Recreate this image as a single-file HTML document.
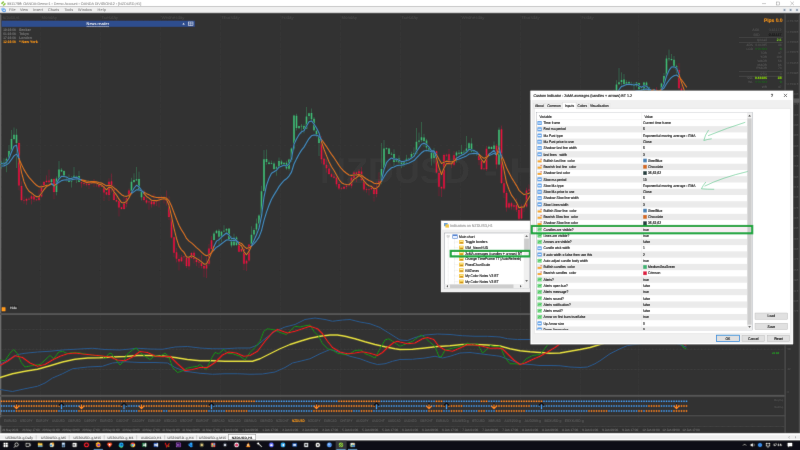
<!DOCTYPE html>
<html><head><meta charset="utf-8"><title>MT4</title>
<style>html,body{margin:0;padding:0;background:#323232;overflow:hidden}svg{display:block;font-family:"Liberation Sans",sans-serif}text{white-space:pre;text-rendering:geometricPrecision}</style>
</head><body>
<svg width="800" height="450" viewBox="0 0 800 450" shape-rendering="auto">
<filter id="bl" x="-10" y="-10" width="820" height="470" filterUnits="userSpaceOnUse"><feConvolveMatrix order="3" kernelMatrix="0.0028 0.0470 0.0028 0.0470 0.8008 0.0470 0.0028 0.0470 0.0028" edgeMode="duplicate" preserveAlpha="true"/></filter>
<g filter="url(#bl)">
<rect x="-10.00" y="-10.00" width="820.00" height="470.00" fill="#323232" />
<rect x="-10.00" y="-10.00" width="820.00" height="16.60" fill="#ffffff" />
<rect x="-10.00" y="6.60" width="820.00" height="5.80" fill="#f0f0f0" />
<rect x="-10.00" y="12.40" width="820.00" height="1.00" fill="#fdfdfd" />
<rect x="-10.00" y="13.40" width="820.00" height="0.90" fill="#262626" />
<path d="M0.9 3.3 L3.2 1.1 L4.3 2.2 L2.0 4.4 Z M2.6 5.0 L4.9 2.8 L6.0 3.9 L3.7 6.1 Z" fill="#8cc63f"/>
<text x="7.20" y="5.20" font-size="3.75" fill="#858585" stroke="#858585" stroke-width="0.05" text-anchor="start" font-weight="normal" textLength="134">5511798: OANDA-Demo-1 - Demo Account - OANDA DIVISION12 - [NZDUSD,H1]</text>
<line x1="762.00" y1="3.60" x2="766.00" y2="3.60" stroke="#777" stroke-width="0.4" />
<rect x="776.6" y="2" width="3" height="3" fill="none" stroke="#777" stroke-width="0.4"/>
<path d="M790.4 1.6 L794 5.2 M794 1.6 L790.4 5.2" stroke="#777" stroke-width="0.4"/>
<circle cx="2.9" cy="9.3" r="1.9" fill="#9cc8f5"/><circle cx="4.1" cy="10.4" r="1.9" fill="#5fa2e8"/><circle cx="4.1" cy="10.4" r="0.8" fill="#e8f2fd"/>
<text x="9.00" y="11.20" font-size="3.75" fill="#777" stroke="#777" stroke-width="0.05" text-anchor="start" font-weight="normal" textLength="6.5">File</text>
<text x="20.00" y="11.20" font-size="3.75" fill="#777" stroke="#777" stroke-width="0.05" text-anchor="start" font-weight="normal" textLength="8">View</text>
<text x="33.00" y="11.20" font-size="3.75" fill="#777" stroke="#777" stroke-width="0.05" text-anchor="start" font-weight="normal" textLength="10">Insert</text>
<text x="48.00" y="11.20" font-size="3.75" fill="#777" stroke="#777" stroke-width="0.05" text-anchor="start" font-weight="normal" textLength="11">Charts</text>
<text x="64.50" y="11.20" font-size="3.75" fill="#777" stroke="#777" stroke-width="0.05" text-anchor="start" font-weight="normal" textLength="8.5">Tools</text>
<text x="78.00" y="11.20" font-size="3.75" fill="#777" stroke="#777" stroke-width="0.05" text-anchor="start" font-weight="normal" textLength="14">Window</text>
<text x="97.50" y="11.20" font-size="3.75" fill="#777" stroke="#777" stroke-width="0.05" text-anchor="start" font-weight="normal" textLength="8.5">Help</text>
<rect x="782.90" y="8.30" width="3.20" height="3.20" fill="#dfe6ee" />
<rect x="783.70" y="9.40" width="1.60" height="1.20" fill="#5a6a80" />
<rect x="789.00" y="8.30" width="3.20" height="3.20" fill="#dfe6ee" />
<rect x="789.80" y="9.40" width="1.60" height="1.20" fill="#5a6a80" />
<rect x="795.40" y="8.30" width="3.20" height="3.20" fill="#dfe6ee" />
<rect x="796.20" y="9.40" width="1.60" height="1.20" fill="#5a6a80" />
<rect x="-10.00" y="14.30" width="11.30" height="419.30" fill="#6a6a6a" />
<line x1="40.40" y1="14.00" x2="40.40" y2="433.00" stroke="#424242" stroke-width="0.5" stroke-dasharray="0.6 0.6"/>
<line x1="100.40" y1="14.00" x2="100.40" y2="433.00" stroke="#424242" stroke-width="0.5" stroke-dasharray="0.6 0.6"/>
<line x1="160.40" y1="14.00" x2="160.40" y2="433.00" stroke="#424242" stroke-width="0.5" stroke-dasharray="0.6 0.6"/>
<line x1="220.40" y1="14.00" x2="220.40" y2="433.00" stroke="#424242" stroke-width="0.5" stroke-dasharray="0.6 0.6"/>
<line x1="280.40" y1="14.00" x2="280.40" y2="433.00" stroke="#424242" stroke-width="0.5" stroke-dasharray="0.6 0.6"/>
<line x1="340.40" y1="14.00" x2="340.40" y2="433.00" stroke="#424242" stroke-width="0.5" stroke-dasharray="0.6 0.6"/>
<line x1="400.40" y1="14.00" x2="400.40" y2="433.00" stroke="#424242" stroke-width="0.5" stroke-dasharray="0.6 0.6"/>
<line x1="460.40" y1="14.00" x2="460.40" y2="433.00" stroke="#424242" stroke-width="0.5" stroke-dasharray="0.6 0.6"/>
<line x1="520.40" y1="14.00" x2="520.40" y2="433.00" stroke="#424242" stroke-width="0.5" stroke-dasharray="0.6 0.6"/>
<line x1="580.40" y1="14.00" x2="580.40" y2="433.00" stroke="#424242" stroke-width="0.5" stroke-dasharray="0.6 0.6"/>
<line x1="638.40" y1="14.00" x2="638.40" y2="433.00" stroke="#424242" stroke-width="0.5" stroke-dasharray="0.6 0.6"/>
<text x="2.80" y="19.00" font-size="3.7" fill="#505050" stroke="#505050" stroke-width="0.05" text-anchor="start" font-weight="normal" textLength="16.8" lengthAdjust="spacingAndGlyphs">NZDUSD,H1</text>
<text x="41.40" y="19.00" font-size="4.4" fill="#4b4b4b" stroke="#4b4b4b" stroke-width="0.05" text-anchor="start" font-weight="normal" >Monday</text>
<text x="101.40" y="19.00" font-size="4.4" fill="#4b4b4b" stroke="#4b4b4b" stroke-width="0.05" text-anchor="start" font-weight="normal" >Tuesday</text>
<text x="161.40" y="19.00" font-size="4.4" fill="#4b4b4b" stroke="#4b4b4b" stroke-width="0.05" text-anchor="start" font-weight="normal" >Wednesday</text>
<text x="221.40" y="19.00" font-size="4.4" fill="#4b4b4b" stroke="#4b4b4b" stroke-width="0.05" text-anchor="start" font-weight="normal" >Thursday</text>
<text x="281.40" y="19.00" font-size="4.4" fill="#4b4b4b" stroke="#4b4b4b" stroke-width="0.05" text-anchor="start" font-weight="normal" >Friday</text>
<text x="341.40" y="19.00" font-size="4.4" fill="#4b4b4b" stroke="#4b4b4b" stroke-width="0.05" text-anchor="start" font-weight="normal" >Monday</text>
<text x="401.40" y="19.00" font-size="4.4" fill="#4b4b4b" stroke="#4b4b4b" stroke-width="0.05" text-anchor="start" font-weight="normal" >Tuesday</text>
<text x="461.40" y="19.00" font-size="4.4" fill="#4b4b4b" stroke="#4b4b4b" stroke-width="0.05" text-anchor="start" font-weight="normal" >Wednesday</text>
<text x="521.40" y="19.00" font-size="4.4" fill="#4b4b4b" stroke="#4b4b4b" stroke-width="0.05" text-anchor="start" font-weight="normal" >Thursday</text>
<text x="581.40" y="19.00" font-size="4.4" fill="#4b4b4b" stroke="#4b4b4b" stroke-width="0.05" text-anchor="start" font-weight="normal" >Friday</text>
<line x1="1.00" y1="21.30" x2="785.00" y2="21.30" stroke="#3a3a3a" stroke-width="0.4" stroke-dasharray="0.6 0.6"/>
<line x1="1.00" y1="31.65" x2="785.00" y2="31.65" stroke="#3a3a3a" stroke-width="0.4" stroke-dasharray="0.6 0.6"/>
<line x1="1.00" y1="42.00" x2="785.00" y2="42.00" stroke="#3a3a3a" stroke-width="0.4" stroke-dasharray="0.6 0.6"/>
<line x1="1.00" y1="52.35" x2="785.00" y2="52.35" stroke="#3a3a3a" stroke-width="0.4" stroke-dasharray="0.6 0.6"/>
<line x1="1.00" y1="62.70" x2="785.00" y2="62.70" stroke="#3a3a3a" stroke-width="0.4" stroke-dasharray="0.6 0.6"/>
<line x1="1.00" y1="73.05" x2="785.00" y2="73.05" stroke="#3a3a3a" stroke-width="0.4" stroke-dasharray="0.6 0.6"/>
<line x1="1.00" y1="83.40" x2="785.00" y2="83.40" stroke="#3a3a3a" stroke-width="0.4" stroke-dasharray="0.6 0.6"/>
<line x1="1.00" y1="93.75" x2="785.00" y2="93.75" stroke="#3a3a3a" stroke-width="0.4" stroke-dasharray="0.6 0.6"/>
<line x1="1.00" y1="104.10" x2="785.00" y2="104.10" stroke="#3a3a3a" stroke-width="0.4" stroke-dasharray="0.6 0.6"/>
<line x1="1.00" y1="114.45" x2="785.00" y2="114.45" stroke="#3a3a3a" stroke-width="0.4" stroke-dasharray="0.6 0.6"/>
<line x1="1.00" y1="124.80" x2="785.00" y2="124.80" stroke="#3a3a3a" stroke-width="0.4" stroke-dasharray="0.6 0.6"/>
<line x1="1.00" y1="135.15" x2="785.00" y2="135.15" stroke="#3a3a3a" stroke-width="0.4" stroke-dasharray="0.6 0.6"/>
<line x1="1.00" y1="145.50" x2="785.00" y2="145.50" stroke="#3a3a3a" stroke-width="0.4" stroke-dasharray="0.6 0.6"/>
<line x1="1.00" y1="155.85" x2="785.00" y2="155.85" stroke="#3a3a3a" stroke-width="0.4" stroke-dasharray="0.6 0.6"/>
<line x1="1.00" y1="166.20" x2="785.00" y2="166.20" stroke="#3a3a3a" stroke-width="0.4" stroke-dasharray="0.6 0.6"/>
<line x1="1.00" y1="176.55" x2="785.00" y2="176.55" stroke="#3a3a3a" stroke-width="0.4" stroke-dasharray="0.6 0.6"/>
<line x1="1.00" y1="186.90" x2="785.00" y2="186.90" stroke="#3a3a3a" stroke-width="0.4" stroke-dasharray="0.6 0.6"/>
<line x1="1.00" y1="197.25" x2="785.00" y2="197.25" stroke="#3a3a3a" stroke-width="0.4" stroke-dasharray="0.6 0.6"/>
<line x1="1.00" y1="207.60" x2="785.00" y2="207.60" stroke="#3a3a3a" stroke-width="0.4" stroke-dasharray="0.6 0.6"/>
<line x1="1.00" y1="217.95" x2="785.00" y2="217.95" stroke="#3a3a3a" stroke-width="0.4" stroke-dasharray="0.6 0.6"/>
<line x1="1.00" y1="228.30" x2="785.00" y2="228.30" stroke="#3a3a3a" stroke-width="0.4" stroke-dasharray="0.6 0.6"/>
<line x1="1.00" y1="238.65" x2="785.00" y2="238.65" stroke="#3a3a3a" stroke-width="0.4" stroke-dasharray="0.6 0.6"/>
<line x1="1.00" y1="249.00" x2="785.00" y2="249.00" stroke="#3a3a3a" stroke-width="0.4" stroke-dasharray="0.6 0.6"/>
<line x1="1.00" y1="259.35" x2="785.00" y2="259.35" stroke="#3a3a3a" stroke-width="0.4" stroke-dasharray="0.6 0.6"/>
<line x1="1.00" y1="269.70" x2="785.00" y2="269.70" stroke="#3a3a3a" stroke-width="0.4" stroke-dasharray="0.6 0.6"/>
<line x1="1.00" y1="280.05" x2="785.00" y2="280.05" stroke="#3a3a3a" stroke-width="0.4" stroke-dasharray="0.6 0.6"/>
<line x1="1.00" y1="290.40" x2="785.00" y2="290.40" stroke="#3a3a3a" stroke-width="0.4" stroke-dasharray="0.6 0.6"/>
<line x1="1.00" y1="300.75" x2="785.00" y2="300.75" stroke="#3a3a3a" stroke-width="0.4" stroke-dasharray="0.6 0.6"/>
<line x1="1.00" y1="311.10" x2="785.00" y2="311.10" stroke="#3a3a3a" stroke-width="0.4" stroke-dasharray="0.6 0.6"/>
<text x="320.00" y="183.00" font-size="36" fill="#383838" stroke="#383838" stroke-width="0" text-anchor="start" font-weight="bold" textLength="150" lengthAdjust="spacingAndGlyphs">NZDUSD</text>
<text x="484.00" y="183.00" font-size="36" fill="#383838" stroke="#383838" stroke-width="0" text-anchor="start" font-weight="bold" textLength="78" lengthAdjust="spacingAndGlyphs">- H1</text>
<rect x="1.60" y="20.70" width="193.20" height="6.10" fill="#2e4d8e" />
<text x="97.80" y="25.10" font-size="3.8" fill="#fff" stroke="#fff" stroke-width="0.05" text-anchor="middle" font-weight="normal" text-decoration="underline" textLength="22.5">News reader</text>
<path d="M182.4 24.6 L183.6 23 L184.8 24.6 Z" fill="#fff"/>
<rect x="188.4" y="22" width="4.6" height="3.6" fill="none" stroke="#fff" stroke-width="0.5"/><path d="M188.4 23.8 H193 M190.7 22 V25.6" stroke="#fff" stroke-width="0.4"/>
<text x="3.20" y="30.90" font-size="3.6" fill="#777" stroke="#777" stroke-width="0.05" text-anchor="start" font-weight="bold" textLength="12.5" lengthAdjust="spacingAndGlyphs">19:16:08</text>
<text x="19.20" y="30.90" font-size="3.6" fill="#777" stroke="#777" stroke-width="0.05" text-anchor="start" font-weight="bold" textLength="11.6" lengthAdjust="spacingAndGlyphs">Broker</text>
<text x="3.20" y="34.90" font-size="3.6" fill="#777" stroke="#777" stroke-width="0.05" text-anchor="start" font-weight="bold" textLength="12.5" lengthAdjust="spacingAndGlyphs">01:16:08</text>
<text x="19.20" y="34.90" font-size="3.6" fill="#777" stroke="#777" stroke-width="0.05" text-anchor="start" font-weight="bold" textLength="9.6" lengthAdjust="spacingAndGlyphs">Tokyo</text>
<text x="3.20" y="38.80" font-size="3.6" fill="#777" stroke="#777" stroke-width="0.05" text-anchor="start" font-weight="bold" textLength="12.5" lengthAdjust="spacingAndGlyphs">17:16:08</text>
<text x="19.20" y="38.80" font-size="3.6" fill="#777" stroke="#777" stroke-width="0.05" text-anchor="start" font-weight="bold" textLength="12.6" lengthAdjust="spacingAndGlyphs">London</text>
<text x="3.20" y="43.00" font-size="3.6" fill="#ff9a1a" stroke="#ff9a1a" stroke-width="0.05" text-anchor="start" font-weight="bold" textLength="12.5" lengthAdjust="spacingAndGlyphs">12:16:08</text>
<text x="19.20" y="43.00" font-size="3.6" fill="#ff9a1a" stroke="#ff9a1a" stroke-width="0.05" text-anchor="start" font-weight="bold" textLength="18.6" lengthAdjust="spacingAndGlyphs">* New York</text>
<path d="M1.5 160.9V168.7M4.0 158.4V166.5M6.5 157.4V172.2M9.0 145.1V160.4M11.5 130.0V152.4M14.0 127.5V140.4M16.5 128.8V168.0M51.5 178.9V184.0M56.5 176.6V195.4M59.0 161.0V181.6M61.5 168.1V172.0M64.0 170.3V177.9M66.5 176.5V181.6M69.0 174.4V182.2M71.5 176.2V187.6M74.0 167.0V178.9M76.5 175.6V183.1M79.0 170.8V181.9M131.5 177.7V193.0M134.0 173.3V182.9M136.5 167.0V180.5M139.0 171.7V191.6M141.5 189.6V200.5M214.0 231.6V240.2M216.5 229.8V233.3M219.0 228.9V245.1M221.5 231.0V241.9M224.0 225.1V231.6M226.5 228.0V234.7M229.0 228.6V239.4M231.5 236.1V247.5M234.0 233.7V246.0M236.5 236.2V245.9M251.5 226.3V246.4M254.0 228.2V237.7M256.5 218.5V234.8M259.0 214.2V227.0M261.5 185.8V219.1M264.0 150.0V191.3M266.5 149.6V164.8M269.0 160.4V164.6M271.5 160.6V164.3M274.0 161.5V169.9M276.5 165.8V175.7M279.0 157.6V167.8M281.5 159.8V165.1M284.0 162.5V166.7M286.5 160.7V169.8M289.0 158.6V170.5M291.5 147.5V162.0M294.0 114.8V150.2M296.5 113.7V130.5M299.0 126.0V128.5M301.5 124.0V133.7M304.0 124.3V133.4M306.5 107.0V129.0M309.0 112.9V119.5M311.5 108.5V121.0M314.0 117.0V131.5M316.5 128.8V137.2M319.0 135.3V156.0M381.5 143.0V184.2M384.0 140.0V169.8M386.5 147.4V149.8M389.0 148.0V153.9M391.5 152.2V155.2M394.0 149.3V167.7M396.5 158.7V161.7M399.0 155.5V163.9M401.5 161.6V168.1M404.0 159.7V166.8M406.5 154.8V164.9M409.0 157.6V161.4M411.5 151.7V159.5M414.0 147.4V156.1M416.5 128.0V154.4M419.0 132.6V144.5M421.5 122.0V142.2M424.0 133.8V146.8M426.5 138.8V150.9M429.0 147.3V152.0M431.5 152.0V165.6M434.0 147.9V163.5M456.5 151.2V162.6M459.0 150.0V155.5M461.5 144.8V154.3M464.0 149.8V155.5M466.5 136.0V152.5M469.0 142.4V152.1M471.5 138.2V152.5M474.0 149.6V155.4M476.5 151.0V155.6M489.0 146.2V148.8M491.5 146.1V148.9M494.0 141.5V149.5M499.0 127.5V164.8M536.5 182.4V197.4M539.0 183.2V188.8M541.5 178.4V193.3M544.0 170.4V184.7M546.5 176.4V184.7M549.0 168.9V181.0M551.5 166.2V170.8M554.0 167.1V170.4M556.5 163.9V168.3M559.0 160.5V166.2M561.5 155.6V163.4M564.0 153.8V165.7M566.5 160.1V171.1M569.0 162.0V167.0M571.5 160.1V165.3M574.0 149.5V163.6M576.5 143.9V160.7M579.0 132.7V148.5M581.5 134.9V142.6M584.0 133.2V138.4M586.5 126.7V137.0M589.0 124.8V131.7M591.5 119.8V126.2M594.0 119.4V124.2M596.5 111.0V121.5M599.0 111.4V116.6M601.5 107.0V114.9M604.0 105.3V110.6M606.5 100.7V107.4M609.0 97.7V106.3M611.5 91.4V100.3M614.0 89.7V95.4M616.5 80.2V92.2M619.0 68.0V84.8M621.5 72.4V87.2M624.0 74.0V84.8M626.5 80.1V85.3M629.0 80.6V84.0M631.5 81.7V86.0M634.0 82.4V90.1M636.5 82.0V87.2M639.0 82.8V94.0M641.5 88.5V91.8M644.0 81.9V91.9M646.5 81.5V89.4M649.0 86.6V94.6M654.0 88.8V98.0M661.5 82.6V96.4M664.0 73.0V85.4M666.5 55.4V78.3M669.0 49.6V61.4M671.5 54.0V60.9M674.0 56.0V68.7M676.5 64.7V73.5" stroke="#3cb371" stroke-width="0.45" opacity="0.75" fill="none"/>
<path d="M1.5 162.4V164.4M4.0 162.5V164.8M6.5 158.7V164.8M9.0 151.0V158.7M11.5 139.1V151.2M14.0 134.7V139.1M16.5 134.7V143.0M51.5 179.3V182.0M56.5 178.6V192.1M59.0 169.4V178.9M61.5 169.8V171.5M64.0 171.1V176.6M66.5 176.8V178.0M69.0 178.2V181.9M71.5 178.2V181.6M74.0 175.8V178.6M76.5 176.0V176.7M79.0 176.1V181.9M131.5 181.8V191.1M134.0 179.9V182.1M136.5 179.3V180.4M139.0 178.9V189.9M141.5 189.7V197.2M214.0 233.6V240.0M216.5 230.8V233.3M219.0 230.8V236.8M221.5 231.7V236.6M224.0 230.8V231.5M226.5 229.1V230.6M229.0 228.6V239.1M231.5 238.8V245.5M234.0 237.6V245.3M236.5 237.4V244.9M251.5 234.8V244.1M254.0 229.9V234.6M256.5 223.4V229.5M259.0 215.4V223.6M261.5 191.3V215.5M264.0 159.2V191.0M266.5 159.1V162.1M269.0 162.5V164.1M271.5 163.0V163.7M274.0 163.4V168.9M276.5 167.2V168.8M279.0 161.1V167.2M281.5 161.4V164.2M284.0 162.7V164.1M286.5 162.7V168.5M289.0 159.4V168.7M291.5 148.6V159.9M294.0 115.5V148.5M296.5 115.8V128.1M299.0 126.1V128.3M301.5 125.8V126.5M304.0 125.9V128.9M306.5 116.4V128.8M309.0 113.3V115.9M311.5 112.9V119.2M314.0 118.8V130.2M316.5 130.5V136.1M319.0 135.8V142.9M381.5 169.0V181.2M384.0 148.5V168.5M386.5 148.2V148.9M389.0 148.4V153.9M391.5 153.8V154.5M394.0 154.0V161.9M396.5 158.7V161.4M399.0 158.5V162.3M401.5 162.0V164.5M404.0 161.2V164.6M406.5 158.7V161.3M409.0 158.4V159.1M411.5 154.1V158.6M414.0 153.2V154.3M416.5 141.8V153.6M419.0 140.5V141.7M421.5 137.2V140.3M424.0 137.6V140.9M426.5 140.6V147.5M429.0 147.7V152.0M431.5 152.1V158.5M434.0 150.8V158.0M456.5 152.4V155.5M459.0 152.7V153.8M461.5 152.1V154.1M464.0 151.8V152.5M466.5 148.6V152.5M469.0 143.3V148.8M471.5 143.5V151.4M474.0 151.0V151.7M476.5 151.1V154.6M489.0 146.7V148.8M491.5 146.9V148.9M494.0 145.6V149.0M499.0 129.8V164.4M536.5 186.4V190.3M539.0 184.6V186.4M541.5 183.3V184.4M544.0 179.6V183.3M546.5 177.5V179.8M549.0 170.0V177.8M551.5 169.8V170.5M554.0 168.2V170.3M556.5 165.7V167.8M559.0 160.7V165.3M561.5 159.6V160.5M564.0 159.9V163.5M566.5 163.0V163.7M569.0 163.5V164.7M571.5 163.4V164.2M574.0 154.6V162.9M576.5 145.3V154.4M579.0 141.9V145.5M581.5 135.0V142.1M584.0 134.8V135.5M586.5 130.7V135.0M589.0 125.6V130.7M591.5 122.7V125.5M594.0 120.2V122.7M596.5 115.4V119.9M599.0 113.5V115.8M601.5 107.7V113.2M604.0 105.6V108.1M606.5 102.5V106.0M609.0 98.9V102.0M611.5 92.2V98.9M614.0 91.7V92.6M616.5 84.4V92.1M619.0 82.2V84.3M621.5 79.9V81.9M624.0 79.6V84.0M626.5 82.2V84.4M629.0 81.9V84.0M631.5 84.0V84.7M634.0 84.4V86.0M636.5 82.6V86.0M639.0 83.1V89.4M641.5 89.0V90.2M644.0 82.6V90.5M646.5 82.6V86.8M649.0 87.2V93.5M654.0 89.1V94.4M661.5 83.5V93.1M664.0 76.1V83.0M666.5 58.5V76.1M669.0 58.5V59.2M671.5 59.0V60.0M674.0 59.7V66.2M676.5 66.1V70.2" stroke="#3cb371" stroke-width="1.6" fill="none"/>
<path d="M19.0 139.9V190.2M21.5 181.4V201.3M24.0 196.5V203.6M26.5 197.7V204.8M29.0 197.5V199.6M31.5 192.5V204.4M34.0 194.5V201.8M36.5 199.1V200.7M39.0 189.7V201.3M41.5 184.6V197.6M44.0 181.1V187.6M46.5 175.4V183.1M49.0 169.8V183.7M54.0 177.6V199.0M81.5 182.3V187.7M84.0 180.9V185.7M86.5 183.2V186.2M89.0 180.9V188.8M91.5 181.1V184.1M94.0 179.1V187.1M96.5 181.2V186.8M99.0 181.7V188.0M101.5 184.6V187.1M104.0 184.8V200.8M106.5 191.7V195.2M109.0 178.3V200.8M111.5 173.5V192.4M114.0 184.9V200.1M116.5 193.0V202.1M119.0 198.9V216.4M121.5 207.3V209.2M124.0 194.9V209.2M126.5 197.6V207.2M129.0 188.7V199.1M144.0 189.8V201.5M146.5 198.1V203.8M149.0 201.3V209.6M151.5 200.2V207.5M154.0 193.7V206.4M156.5 199.8V205.9M159.0 196.8V207.3M161.5 195.6V199.2M164.0 195.9V203.4M166.5 190.6V205.7M169.0 196.3V219.9M171.5 213.4V238.4M174.0 236.9V256.8M176.5 248.1V262.5M179.0 254.8V270.4M181.5 254.8V262.0M184.0 256.5V264.1M186.5 256.6V268.0M189.0 256.4V269.7M191.5 252.2V258.6M194.0 250.5V263.3M196.5 259.2V266.1M199.0 256.9V267.8M201.5 254.9V268.5M204.0 265.3V277.0M206.5 257.5V278.0M209.0 244.2V265.8M211.5 236.2V250.0M239.0 242.0V251.9M241.5 247.3V251.6M244.0 247.6V270.0M246.5 259.6V271.0M249.0 244.4V261.9M321.5 136.1V163.6M324.0 149.4V165.3M326.5 159.7V172.5M329.0 164.9V174.7M331.5 172.8V177.3M334.0 174.0V178.6M336.5 176.1V186.7M339.0 182.1V189.9M341.5 187.0V189.7M344.0 186.3V188.7M346.5 184.5V189.3M349.0 182.5V187.1M351.5 176.1V188.2M354.0 171.2V180.8M356.5 171.7V182.0M359.0 169.1V174.9M361.5 167.1V181.2M364.0 177.1V191.3M366.5 187.1V192.7M369.0 187.8V195.3M371.5 186.7V189.8M374.0 184.4V201.5M376.5 181.7V197.3M379.0 172.3V187.0M436.5 150.7V173.0M439.0 169.2V196.0M441.5 186.8V197.0M444.0 153.7V190.1M446.5 153.7V156.8M449.0 149.1V163.5M451.5 162.0V168.2M454.0 151.2V166.4M479.0 152.3V165.3M481.5 158.3V169.4M484.0 168.3V169.4M486.5 145.8V171.1M496.5 143.8V168.7M501.5 125.5V184.0M504.0 178.0V197.9M506.5 191.1V211.6M509.0 201.8V209.2M511.5 201.7V209.6M514.0 203.2V210.3M516.5 198.6V212.0M519.0 206.7V222.7M521.5 204.3V219.2M524.0 203.8V211.8M526.5 187.7V207.7M529.0 184.4V191.4M531.5 184.7V198.1M534.0 185.1V191.2M651.5 90.8V96.1M656.5 87.1V96.2M659.0 91.6V95.4M679.0 63.0V89.8M681.5 85.1V100.0M684.0 90.2V107.2M686.5 103.5V110.6" stroke="#dc143c" stroke-width="0.45" opacity="0.75" fill="none"/>
<path d="M19.0 143.0V185.6M21.5 186.1V199.9M24.0 199.9V200.6M26.5 198.9V200.7M29.0 198.8V199.5M31.5 196.2V198.7M34.0 196.3V199.5M36.5 199.5V200.2M39.0 196.7V200.1M41.5 186.5V196.4M44.0 182.1V186.1M46.5 180.8V182.0M49.0 180.4V182.3M54.0 178.9V191.9M81.5 182.3V183.3M84.0 183.1V183.8M86.5 183.6V184.4M89.0 183.5V184.9M91.5 182.6V183.8M94.0 182.0V182.7M96.5 182.3V183.5M99.0 183.5V186.6M101.5 186.0V186.7M104.0 186.0V192.4M106.5 192.2V194.6M109.0 181.8V194.9M111.5 181.3V189.1M114.0 189.1V200.0M116.5 199.9V201.5M119.0 201.0V207.5M121.5 207.3V209.0M124.0 203.8V209.1M126.5 198.2V203.8M129.0 190.6V197.8M144.0 196.7V199.9M146.5 200.2V202.4M149.0 201.5V202.2M151.5 201.2V204.3M154.0 201.5V204.2M156.5 200.7V201.9M159.0 198.5V201.0M161.5 197.8V198.5M164.0 197.3V198.0M166.5 198.0V200.9M169.0 201.0V217.0M171.5 217.2V237.6M174.0 237.2V252.7M176.5 252.3V258.8M179.0 259.0V261.4M181.5 257.3V261.3M184.0 256.6V257.3M186.5 257.6V266.1M189.0 257.8V266.2M191.5 253.1V258.1M194.0 252.7V258.9M196.5 259.3V262.0M199.0 261.5V262.5M201.5 262.8V266.1M204.0 266.0V268.6M206.5 263.8V268.5M209.0 248.5V263.8M211.5 240.2V249.0M239.0 245.2V251.7M241.5 249.1V251.5M244.0 249.1V263.8M246.5 260.7V263.5M249.0 244.5V260.5M321.5 142.5V159.2M324.0 158.8V164.4M326.5 164.8V168.2M329.0 168.6V174.0M331.5 174.2V176.8M334.0 176.6V177.8M336.5 177.6V184.2M339.0 184.0V188.5M341.5 188.4V189.1M344.0 186.8V188.7M346.5 185.2V186.7M349.0 184.8V185.5M351.5 177.7V185.8M354.0 172.6V178.1M356.5 172.6V174.8M359.0 171.2V174.5M361.5 171.6V180.0M364.0 179.8V189.4M366.5 189.1V189.8M369.0 188.9V189.6M371.5 187.5V189.2M374.0 187.5V194.0M376.5 186.8V194.0M379.0 181.2V186.5M436.5 151.2V172.5M439.0 172.9V186.7M441.5 186.8V188.4M444.0 155.1V188.6M446.5 154.7V155.4M449.0 154.3V163.4M451.5 163.4V164.8M454.0 155.2V164.8M479.0 154.2V160.1M481.5 159.9V169.3M484.0 168.6V169.3M486.5 148.7V169.3M496.5 145.7V164.5M501.5 129.3V182.9M504.0 183.2V192.8M506.5 193.0V207.5M509.0 203.2V207.5M511.5 203.3V206.5M514.0 205.3V206.7M516.5 204.8V209.8M519.0 210.1V218.8M521.5 205.9V218.6M524.0 205.4V206.7M526.5 190.4V206.5M529.0 189.6V190.6M531.5 185.9V189.3M534.0 186.1V189.8M651.5 93.7V94.7M656.5 89.5V93.2M659.0 93.0V93.7M679.0 70.1V88.2M681.5 88.6V97.7M684.0 97.2V104.0M686.5 104.3V109.4" stroke="#dc143c" stroke-width="1.6" fill="none"/>
<polyline points="1.50,166.06 4.00,165.88 6.50,164.84 9.00,162.87 11.50,159.48 14.00,155.93 16.50,154.09 19.00,158.59 21.50,164.49 24.00,169.62 26.50,173.81 29.00,177.40 31.50,180.08 34.00,182.85 36.50,185.27 39.00,186.91 41.50,186.85 44.00,186.16 46.50,185.40 49.00,184.96 51.50,184.15 54.00,185.26 56.50,184.31 59.00,182.18 61.50,180.65 64.00,180.07 66.50,179.77 69.00,180.08 71.50,179.80 74.00,179.23 76.50,178.83 79.00,179.27 81.50,179.84 84.00,180.38 86.50,180.95 89.00,181.32 91.50,181.50 94.00,181.63 96.50,181.90 99.00,182.57 101.50,183.10 104.00,184.43 106.50,185.89 109.00,185.30 111.50,185.84 114.00,187.85 116.50,189.80 119.00,192.33 121.50,194.71 124.00,196.01 126.50,196.33 129.00,195.51 131.50,193.55 134.00,191.60 136.50,189.84 139.00,189.85 141.50,190.89 144.00,192.18 146.50,193.64 149.00,194.77 151.50,196.14 154.00,196.90 156.50,197.45 159.00,197.60 161.50,197.65 164.00,197.64 166.50,198.11 169.00,200.80 171.50,206.06 174.00,212.73 176.50,219.31 179.00,225.33 181.50,229.89 184.00,233.78 186.50,238.40 189.00,241.17 191.50,242.88 194.00,245.17 196.50,247.57 199.00,249.70 201.50,252.04 204.00,254.41 206.50,255.75 209.00,254.72 211.50,252.65 214.00,249.93 216.50,247.20 219.00,245.72 221.50,243.72 224.00,241.89 226.50,240.06 229.00,239.92 231.50,240.72 234.00,240.27 236.50,240.94 239.00,242.48 241.50,243.42 244.00,246.34 246.50,248.38 249.00,247.83 251.50,245.97 254.00,243.68 256.50,240.78 259.00,237.16 261.50,230.62 264.00,220.41 266.50,212.08 269.00,205.22 271.50,199.20 274.00,194.87 276.50,190.91 279.00,186.65 281.50,183.45 284.00,180.49 286.50,178.78 289.00,176.02 291.50,172.11 294.00,164.01 296.50,158.88 299.00,154.19 301.50,150.16 304.00,147.13 306.50,142.74 309.00,138.53 311.50,135.77 314.00,134.97 316.50,135.13 319.00,136.23 321.50,139.52 324.00,143.08 326.50,146.66 329.00,150.57 331.50,154.32 334.00,157.68 336.50,161.47 339.00,165.33 341.50,168.71 344.00,171.29 346.50,173.28 349.00,175.01 351.50,175.39 354.00,174.99 356.50,174.96 359.00,174.41 361.50,175.21 364.00,177.23 366.50,179.00 369.00,180.48 371.50,181.48 374.00,183.27 376.50,183.77 379.00,183.40 381.50,181.34 384.00,176.66 386.50,172.68 389.00,169.99 391.50,167.78 394.00,166.94 396.50,165.77 399.00,165.27 401.50,165.16 404.00,164.60 406.50,163.76 409.00,163.00 411.50,161.73 414.00,160.52 416.50,157.84 419.00,155.36 421.50,152.76 424.00,151.07 426.50,150.56 429.00,150.76 431.50,151.86 434.00,151.71 436.50,154.68 439.00,159.26 441.50,163.42 444.00,162.24 446.50,161.15 449.00,161.48 451.50,161.95 454.00,160.98 456.50,159.75 459.00,158.90 461.50,157.93 464.00,157.09 466.50,155.88 469.00,154.08 471.50,153.69 474.00,153.39 476.50,153.57 479.00,154.50 481.50,156.61 484.00,158.38 486.50,157.00 489.00,155.53 491.50,154.59 494.00,153.30 496.50,154.89 499.00,151.31 501.50,155.82 504.00,161.10 506.50,167.73 509.00,172.81 511.50,177.62 514.00,181.57 516.50,185.61 519.00,190.35 521.50,192.57 524.00,194.59 526.50,193.99 529.00,193.36 531.50,192.29 534.00,191.94 536.50,191.16 539.00,190.21 541.50,189.23 544.00,187.86 546.50,186.38 549.00,184.03 551.50,182.06 554.00,180.08 556.50,178.03 559.00,175.55 561.50,173.28 564.00,171.89 566.50,170.68 569.00,169.82 571.50,168.90 574.00,166.86 576.50,163.78 579.00,160.66 581.50,156.99 584.00,153.88 586.50,150.57 589.00,147.00 591.50,143.54 594.00,140.21 596.50,136.66 599.00,133.35 601.50,129.68 604.00,126.23 606.50,122.84 609.00,119.42 611.50,115.54 614.00,112.13 616.50,108.16 619.00,104.45 621.50,100.94 624.00,98.52 626.50,96.18 629.00,94.44 631.50,93.05 634.00,92.04 636.50,90.69 639.00,90.50 641.50,90.45 644.00,89.33 646.50,88.97 649.00,89.61 651.50,90.34 654.00,90.16 656.50,90.59 659.00,91.02 661.50,89.95 664.00,87.98 666.50,83.77 669.00,80.26 671.50,77.36 674.00,75.77 676.50,74.98 679.00,76.87 681.50,79.84 684.00,83.30 686.50,87.03" fill="none" stroke="#243e3e" stroke-width="1.8" stroke-linejoin="round" stroke-linecap="round" />
<polyline points="1.50,163.52 4.00,163.94 6.50,162.18 9.00,158.46 11.50,152.01 14.00,146.23 16.50,145.16 19.00,158.65 21.50,172.40 24.00,181.72 26.50,187.46 29.00,191.29 31.50,192.92 34.00,195.11 36.50,196.66 39.00,196.69 41.50,193.28 44.00,189.54 46.50,186.64 49.00,185.19 51.50,183.22 54.00,186.13 56.50,183.62 59.00,178.87 61.50,176.40 64.00,176.47 66.50,176.98 69.00,178.62 71.50,178.47 74.00,177.58 76.50,177.19 79.00,178.76 81.50,180.28 84.00,181.38 86.50,182.38 89.00,182.75 91.50,182.71 94.00,182.60 96.50,182.90 99.00,184.15 101.50,184.86 104.00,187.36 106.50,189.79 109.00,187.11 111.50,187.77 114.00,191.83 116.50,195.05 119.00,199.20 121.50,202.47 124.00,202.91 126.50,201.35 129.00,197.76 131.50,192.44 134.00,188.26 136.50,185.26 139.00,186.81 141.50,190.26 144.00,193.47 146.50,196.45 149.00,198.15 151.50,200.21 154.00,200.63 156.50,200.66 159.00,199.94 161.50,199.28 164.00,198.72 166.50,199.46 169.00,205.29 171.50,216.07 174.00,228.28 176.50,238.47 179.00,246.11 181.50,249.84 184.00,252.26 186.50,256.87 189.00,257.18 191.50,255.83 194.00,256.86 196.50,258.57 199.00,259.87 201.50,261.94 204.00,264.17 206.50,264.04 209.00,258.87 211.50,252.65 214.00,246.32 216.50,241.14 219.00,239.71 221.50,237.04 224.00,235.00 226.50,233.03 229.00,235.05 231.50,238.54 234.00,238.22 236.50,240.46 239.00,244.22 241.50,245.83 244.00,251.83 246.50,254.77 249.00,251.37 251.50,245.85 254.00,240.55 256.50,234.82 259.00,228.36 261.50,216.02 264.00,197.07 266.50,185.41 269.00,178.29 271.50,173.22 274.00,171.78 276.50,170.24 279.00,167.20 281.50,166.21 284.00,165.05 286.50,166.21 289.00,163.94 291.50,158.84 294.00,144.38 296.50,138.94 299.00,134.66 301.50,131.77 304.00,130.83 306.50,126.01 309.00,121.77 311.50,120.91 314.00,124.01 316.50,128.03 319.00,132.97 321.50,141.73 324.00,149.29 326.50,155.59 329.00,161.73 331.50,166.76 334.00,170.45 336.50,175.03 339.00,179.52 341.50,182.69 344.00,184.05 346.50,184.44 349.00,184.76 351.50,182.39 354.00,179.12 356.50,177.67 359.00,175.49 361.50,176.99 364.00,181.12 366.50,183.94 369.00,185.75 371.50,186.34 374.00,188.89 376.50,188.18 379.00,185.86 381.50,180.23 384.00,169.66 386.50,162.72 389.00,159.76 391.50,158.01 394.00,159.31 396.50,159.12 399.00,160.17 401.50,161.62 404.00,161.49 406.50,160.57 409.00,159.86 411.50,157.95 414.00,156.38 416.50,151.51 419.00,147.83 421.50,144.27 424.00,143.16 426.50,144.60 429.00,147.06 431.50,150.86 434.00,150.85 436.50,158.07 439.00,167.62 441.50,174.54 444.00,168.07 446.50,163.60 449.00,163.54 451.50,163.95 454.00,161.03 456.50,158.15 459.00,156.70 461.50,155.16 464.00,154.12 466.50,152.29 469.00,149.29 471.50,149.98 474.00,150.52 476.50,151.89 479.00,154.61 481.50,159.52 484.00,162.66 486.50,158.01 489.00,154.25 491.50,152.48 494.00,150.17 496.50,154.93 499.00,146.55 501.50,158.67 504.00,170.04 506.50,182.54 509.00,189.44 511.50,195.13 514.00,198.51 516.50,202.28 519.00,207.79 521.50,207.15 524.00,207.02 526.50,201.47 529.00,197.50 531.50,193.64 534.00,192.37 536.50,190.40 539.00,188.45 541.50,186.75 544.00,184.37 546.50,182.08 549.00,178.04 551.50,175.43 554.00,173.03 556.50,170.58 559.00,167.30 561.50,164.74 564.00,164.34 566.50,164.03 569.00,164.25 571.50,163.96 574.00,160.84 576.50,155.66 579.00,151.08 581.50,145.71 584.00,142.22 586.50,138.39 589.00,134.12 591.50,130.32 594.00,126.97 596.50,123.10 599.00,119.90 601.50,115.82 604.00,112.40 606.50,109.09 609.00,105.70 611.50,101.21 614.00,98.03 616.50,93.48 619.00,89.71 621.50,86.43 624.00,85.62 626.50,84.46 629.00,84.30 631.50,84.44 634.00,84.94 636.50,84.17 639.00,85.90 641.50,87.33 644.00,85.74 646.50,86.09 649.00,88.56 651.50,90.61 654.00,90.11 656.50,91.13 659.00,91.96 661.50,89.15 664.00,84.80 666.50,76.04 669.00,70.42 671.50,66.95 674.00,66.70 676.50,67.89 679.00,74.67 681.50,82.33 684.00,89.57 686.50,96.17" fill="none" stroke="#243e3e" stroke-width="1.8" stroke-linejoin="round" stroke-linecap="round" />
<polyline points="1.50,166.06 4.00,165.88 6.50,164.84 9.00,162.87 11.50,159.48 14.00,155.93 16.50,154.09 19.00,158.59" fill="none" stroke="#4682b4" stroke-width="1.1" stroke-linejoin="round" stroke-linecap="round" />
<polyline points="19.00,158.59 21.50,164.49 24.00,169.62 26.50,173.81 29.00,177.40 31.50,180.08 34.00,182.85 36.50,185.27 39.00,186.91 41.50,186.85 44.00,186.16 46.50,185.40 49.00,184.96 51.50,184.15" fill="none" stroke="#d2691e" stroke-width="1.1" stroke-linejoin="round" stroke-linecap="round" />
<polyline points="51.50,184.15 54.00,185.26" fill="none" stroke="#4682b4" stroke-width="1.1" stroke-linejoin="round" stroke-linecap="round" />
<polyline points="54.00,185.26 56.50,184.31" fill="none" stroke="#d2691e" stroke-width="1.1" stroke-linejoin="round" stroke-linecap="round" />
<polyline points="56.50,184.31 59.00,182.18 61.50,180.65 64.00,180.07 66.50,179.77 69.00,180.08 71.50,179.80 74.00,179.23 76.50,178.83 79.00,179.27 81.50,179.84" fill="none" stroke="#4682b4" stroke-width="1.1" stroke-linejoin="round" stroke-linecap="round" />
<polyline points="81.50,179.84 84.00,180.38 86.50,180.95 89.00,181.32 91.50,181.50 94.00,181.63 96.50,181.90 99.00,182.57 101.50,183.10 104.00,184.43 106.50,185.89 109.00,185.30 111.50,185.84 114.00,187.85 116.50,189.80 119.00,192.33 121.50,194.71 124.00,196.01 126.50,196.33 129.00,195.51 131.50,193.55" fill="none" stroke="#d2691e" stroke-width="1.1" stroke-linejoin="round" stroke-linecap="round" />
<polyline points="131.50,193.55 134.00,191.60 136.50,189.84 139.00,189.85 141.50,190.89 144.00,192.18" fill="none" stroke="#4682b4" stroke-width="1.1" stroke-linejoin="round" stroke-linecap="round" />
<polyline points="144.00,192.18 146.50,193.64 149.00,194.77 151.50,196.14 154.00,196.90 156.50,197.45 159.00,197.60 161.50,197.65 164.00,197.64 166.50,198.11 169.00,200.80 171.50,206.06 174.00,212.73 176.50,219.31 179.00,225.33 181.50,229.89 184.00,233.78 186.50,238.40 189.00,241.17 191.50,242.88 194.00,245.17 196.50,247.57 199.00,249.70 201.50,252.04 204.00,254.41 206.50,255.75 209.00,254.72 211.50,252.65 214.00,249.93" fill="none" stroke="#d2691e" stroke-width="1.1" stroke-linejoin="round" stroke-linecap="round" />
<polyline points="214.00,249.93 216.50,247.20 219.00,245.72 221.50,243.72 224.00,241.89 226.50,240.06 229.00,239.92 231.50,240.72 234.00,240.27 236.50,240.94 239.00,242.48" fill="none" stroke="#4682b4" stroke-width="1.1" stroke-linejoin="round" stroke-linecap="round" />
<polyline points="239.00,242.48 241.50,243.42 244.00,246.34 246.50,248.38 249.00,247.83 251.50,245.97" fill="none" stroke="#d2691e" stroke-width="1.1" stroke-linejoin="round" stroke-linecap="round" />
<polyline points="251.50,245.97 254.00,243.68 256.50,240.78 259.00,237.16 261.50,230.62 264.00,220.41 266.50,212.08 269.00,205.22 271.50,199.20 274.00,194.87 276.50,190.91 279.00,186.65 281.50,183.45 284.00,180.49 286.50,178.78 289.00,176.02 291.50,172.11 294.00,164.01 296.50,158.88 299.00,154.19 301.50,150.16 304.00,147.13 306.50,142.74 309.00,138.53 311.50,135.77 314.00,134.97 316.50,135.13 319.00,136.23 321.50,139.52" fill="none" stroke="#4682b4" stroke-width="1.1" stroke-linejoin="round" stroke-linecap="round" />
<polyline points="321.50,139.52 324.00,143.08 326.50,146.66 329.00,150.57 331.50,154.32 334.00,157.68 336.50,161.47 339.00,165.33 341.50,168.71 344.00,171.29 346.50,173.28 349.00,175.01 351.50,175.39 354.00,174.99 356.50,174.96 359.00,174.41 361.50,175.21 364.00,177.23 366.50,179.00 369.00,180.48 371.50,181.48 374.00,183.27 376.50,183.77 379.00,183.40 381.50,181.34" fill="none" stroke="#d2691e" stroke-width="1.1" stroke-linejoin="round" stroke-linecap="round" />
<polyline points="381.50,181.34 384.00,176.66 386.50,172.68 389.00,169.99 391.50,167.78 394.00,166.94 396.50,165.77 399.00,165.27 401.50,165.16 404.00,164.60 406.50,163.76 409.00,163.00 411.50,161.73 414.00,160.52 416.50,157.84 419.00,155.36 421.50,152.76 424.00,151.07 426.50,150.56 429.00,150.76 431.50,151.86 434.00,151.71 436.50,154.68" fill="none" stroke="#4682b4" stroke-width="1.1" stroke-linejoin="round" stroke-linecap="round" />
<polyline points="436.50,154.68 439.00,159.26 441.50,163.42 444.00,162.24 446.50,161.15 449.00,161.48 451.50,161.95 454.00,160.98 456.50,159.75" fill="none" stroke="#d2691e" stroke-width="1.1" stroke-linejoin="round" stroke-linecap="round" />
<polyline points="456.50,159.75 459.00,158.90 461.50,157.93 464.00,157.09 466.50,155.88 469.00,154.08 471.50,153.69 474.00,153.39 476.50,153.57 479.00,154.50" fill="none" stroke="#4682b4" stroke-width="1.1" stroke-linejoin="round" stroke-linecap="round" />
<polyline points="479.00,154.50 481.50,156.61 484.00,158.38 486.50,157.00 489.00,155.53" fill="none" stroke="#d2691e" stroke-width="1.1" stroke-linejoin="round" stroke-linecap="round" />
<polyline points="489.00,155.53 491.50,154.59 494.00,153.30 496.50,154.89" fill="none" stroke="#4682b4" stroke-width="1.1" stroke-linejoin="round" stroke-linecap="round" />
<polyline points="496.50,154.89 499.00,151.31" fill="none" stroke="#d2691e" stroke-width="1.1" stroke-linejoin="round" stroke-linecap="round" />
<polyline points="499.00,151.31 501.50,155.82" fill="none" stroke="#4682b4" stroke-width="1.1" stroke-linejoin="round" stroke-linecap="round" />
<polyline points="501.50,155.82 504.00,161.10 506.50,167.73 509.00,172.81 511.50,177.62 514.00,181.57 516.50,185.61 519.00,190.35 521.50,192.57 524.00,194.59 526.50,193.99 529.00,193.36 531.50,192.29 534.00,191.94 536.50,191.16" fill="none" stroke="#d2691e" stroke-width="1.1" stroke-linejoin="round" stroke-linecap="round" />
<polyline points="536.50,191.16 539.00,190.21 541.50,189.23 544.00,187.86 546.50,186.38 549.00,184.03 551.50,182.06 554.00,180.08 556.50,178.03 559.00,175.55 561.50,173.28 564.00,171.89 566.50,170.68 569.00,169.82 571.50,168.90 574.00,166.86 576.50,163.78 579.00,160.66 581.50,156.99 584.00,153.88 586.50,150.57 589.00,147.00 591.50,143.54 594.00,140.21 596.50,136.66 599.00,133.35 601.50,129.68 604.00,126.23 606.50,122.84 609.00,119.42 611.50,115.54 614.00,112.13 616.50,108.16 619.00,104.45 621.50,100.94 624.00,98.52 626.50,96.18 629.00,94.44 631.50,93.05 634.00,92.04 636.50,90.69 639.00,90.50 641.50,90.45 644.00,89.33 646.50,88.97 649.00,89.61 651.50,90.34" fill="none" stroke="#4682b4" stroke-width="1.1" stroke-linejoin="round" stroke-linecap="round" />
<polyline points="651.50,90.34 654.00,90.16" fill="none" stroke="#d2691e" stroke-width="1.1" stroke-linejoin="round" stroke-linecap="round" />
<polyline points="654.00,90.16 656.50,90.59" fill="none" stroke="#4682b4" stroke-width="1.1" stroke-linejoin="round" stroke-linecap="round" />
<polyline points="656.50,90.59 659.00,91.02 661.50,89.95" fill="none" stroke="#d2691e" stroke-width="1.1" stroke-linejoin="round" stroke-linecap="round" />
<polyline points="661.50,89.95 664.00,87.98 666.50,83.77 669.00,80.26 671.50,77.36 674.00,75.77 676.50,74.98 679.00,76.87" fill="none" stroke="#4682b4" stroke-width="1.1" stroke-linejoin="round" stroke-linecap="round" />
<polyline points="679.00,76.87 681.50,79.84 684.00,83.30 686.50,87.03" fill="none" stroke="#d2691e" stroke-width="1.1" stroke-linejoin="round" stroke-linecap="round" />
<polyline points="1.50,163.52 4.00,163.94 6.50,162.18 9.00,158.46 11.50,152.01 14.00,146.23 16.50,145.16 19.00,158.65" fill="none" stroke="#4682b4" stroke-width="1.1" stroke-linejoin="round" stroke-linecap="round" />
<polyline points="19.00,158.65 21.50,172.40 24.00,181.72 26.50,187.46 29.00,191.29 31.50,192.92 34.00,195.11 36.50,196.66 39.00,196.69 41.50,193.28 44.00,189.54 46.50,186.64 49.00,185.19 51.50,183.22" fill="none" stroke="#d2691e" stroke-width="1.1" stroke-linejoin="round" stroke-linecap="round" />
<polyline points="51.50,183.22 54.00,186.13" fill="none" stroke="#4682b4" stroke-width="1.1" stroke-linejoin="round" stroke-linecap="round" />
<polyline points="54.00,186.13 56.50,183.62" fill="none" stroke="#d2691e" stroke-width="1.1" stroke-linejoin="round" stroke-linecap="round" />
<polyline points="56.50,183.62 59.00,178.87 61.50,176.40 64.00,176.47 66.50,176.98 69.00,178.62 71.50,178.47 74.00,177.58 76.50,177.19 79.00,178.76 81.50,180.28" fill="none" stroke="#4682b4" stroke-width="1.1" stroke-linejoin="round" stroke-linecap="round" />
<polyline points="81.50,180.28 84.00,181.38 86.50,182.38 89.00,182.75 91.50,182.71 94.00,182.60 96.50,182.90 99.00,184.15 101.50,184.86 104.00,187.36 106.50,189.79 109.00,187.11 111.50,187.77 114.00,191.83 116.50,195.05 119.00,199.20 121.50,202.47 124.00,202.91 126.50,201.35 129.00,197.76 131.50,192.44" fill="none" stroke="#d2691e" stroke-width="1.1" stroke-linejoin="round" stroke-linecap="round" />
<polyline points="131.50,192.44 134.00,188.26 136.50,185.26 139.00,186.81 141.50,190.26 144.00,193.47" fill="none" stroke="#4682b4" stroke-width="1.1" stroke-linejoin="round" stroke-linecap="round" />
<polyline points="144.00,193.47 146.50,196.45 149.00,198.15 151.50,200.21 154.00,200.63 156.50,200.66 159.00,199.94 161.50,199.28 164.00,198.72 166.50,199.46 169.00,205.29 171.50,216.07 174.00,228.28 176.50,238.47 179.00,246.11 181.50,249.84 184.00,252.26 186.50,256.87 189.00,257.18 191.50,255.83 194.00,256.86 196.50,258.57 199.00,259.87 201.50,261.94 204.00,264.17 206.50,264.04 209.00,258.87 211.50,252.65 214.00,246.32" fill="none" stroke="#d2691e" stroke-width="1.1" stroke-linejoin="round" stroke-linecap="round" />
<polyline points="214.00,246.32 216.50,241.14 219.00,239.71 221.50,237.04 224.00,235.00 226.50,233.03 229.00,235.05 231.50,238.54 234.00,238.22 236.50,240.46 239.00,244.22" fill="none" stroke="#4682b4" stroke-width="1.1" stroke-linejoin="round" stroke-linecap="round" />
<polyline points="239.00,244.22 241.50,245.83 244.00,251.83 246.50,254.77 249.00,251.37 251.50,245.85" fill="none" stroke="#d2691e" stroke-width="1.1" stroke-linejoin="round" stroke-linecap="round" />
<polyline points="251.50,245.85 254.00,240.55 256.50,234.82 259.00,228.36 261.50,216.02 264.00,197.07 266.50,185.41 269.00,178.29 271.50,173.22 274.00,171.78 276.50,170.24 279.00,167.20 281.50,166.21 284.00,165.05 286.50,166.21 289.00,163.94 291.50,158.84 294.00,144.38 296.50,138.94 299.00,134.66 301.50,131.77 304.00,130.83 306.50,126.01 309.00,121.77 311.50,120.91 314.00,124.01 316.50,128.03 319.00,132.97 321.50,141.73" fill="none" stroke="#4682b4" stroke-width="1.1" stroke-linejoin="round" stroke-linecap="round" />
<polyline points="321.50,141.73 324.00,149.29 326.50,155.59 329.00,161.73 331.50,166.76 334.00,170.45 336.50,175.03 339.00,179.52 341.50,182.69 344.00,184.05 346.50,184.44 349.00,184.76 351.50,182.39 354.00,179.12 356.50,177.67 359.00,175.49 361.50,176.99 364.00,181.12 366.50,183.94 369.00,185.75 371.50,186.34 374.00,188.89 376.50,188.18 379.00,185.86 381.50,180.23" fill="none" stroke="#d2691e" stroke-width="1.1" stroke-linejoin="round" stroke-linecap="round" />
<polyline points="381.50,180.23 384.00,169.66 386.50,162.72 389.00,159.76 391.50,158.01 394.00,159.31 396.50,159.12 399.00,160.17 401.50,161.62 404.00,161.49 406.50,160.57 409.00,159.86 411.50,157.95 414.00,156.38 416.50,151.51 419.00,147.83 421.50,144.27 424.00,143.16 426.50,144.60 429.00,147.06 431.50,150.86 434.00,150.85 436.50,158.07" fill="none" stroke="#4682b4" stroke-width="1.1" stroke-linejoin="round" stroke-linecap="round" />
<polyline points="436.50,158.07 439.00,167.62 441.50,174.54 444.00,168.07 446.50,163.60 449.00,163.54 451.50,163.95 454.00,161.03 456.50,158.15" fill="none" stroke="#d2691e" stroke-width="1.1" stroke-linejoin="round" stroke-linecap="round" />
<polyline points="456.50,158.15 459.00,156.70 461.50,155.16 464.00,154.12 466.50,152.29 469.00,149.29 471.50,149.98 474.00,150.52 476.50,151.89 479.00,154.61" fill="none" stroke="#4682b4" stroke-width="1.1" stroke-linejoin="round" stroke-linecap="round" />
<polyline points="479.00,154.61 481.50,159.52 484.00,162.66 486.50,158.01 489.00,154.25" fill="none" stroke="#d2691e" stroke-width="1.1" stroke-linejoin="round" stroke-linecap="round" />
<polyline points="489.00,154.25 491.50,152.48 494.00,150.17 496.50,154.93" fill="none" stroke="#4682b4" stroke-width="1.1" stroke-linejoin="round" stroke-linecap="round" />
<polyline points="496.50,154.93 499.00,146.55" fill="none" stroke="#d2691e" stroke-width="1.1" stroke-linejoin="round" stroke-linecap="round" />
<polyline points="499.00,146.55 501.50,158.67" fill="none" stroke="#4682b4" stroke-width="1.1" stroke-linejoin="round" stroke-linecap="round" />
<polyline points="501.50,158.67 504.00,170.04 506.50,182.54 509.00,189.44 511.50,195.13 514.00,198.51 516.50,202.28 519.00,207.79 521.50,207.15 524.00,207.02 526.50,201.47 529.00,197.50 531.50,193.64 534.00,192.37 536.50,190.40" fill="none" stroke="#d2691e" stroke-width="1.1" stroke-linejoin="round" stroke-linecap="round" />
<polyline points="536.50,190.40 539.00,188.45 541.50,186.75 544.00,184.37 546.50,182.08 549.00,178.04 551.50,175.43 554.00,173.03 556.50,170.58 559.00,167.30 561.50,164.74 564.00,164.34 566.50,164.03 569.00,164.25 571.50,163.96 574.00,160.84 576.50,155.66 579.00,151.08 581.50,145.71 584.00,142.22 586.50,138.39 589.00,134.12 591.50,130.32 594.00,126.97 596.50,123.10 599.00,119.90 601.50,115.82 604.00,112.40 606.50,109.09 609.00,105.70 611.50,101.21 614.00,98.03 616.50,93.48 619.00,89.71 621.50,86.43 624.00,85.62 626.50,84.46 629.00,84.30 631.50,84.44 634.00,84.94 636.50,84.17 639.00,85.90 641.50,87.33 644.00,85.74 646.50,86.09 649.00,88.56 651.50,90.61" fill="none" stroke="#4682b4" stroke-width="1.1" stroke-linejoin="round" stroke-linecap="round" />
<polyline points="651.50,90.61 654.00,90.11" fill="none" stroke="#d2691e" stroke-width="1.1" stroke-linejoin="round" stroke-linecap="round" />
<polyline points="654.00,90.11 656.50,91.13" fill="none" stroke="#4682b4" stroke-width="1.1" stroke-linejoin="round" stroke-linecap="round" />
<polyline points="656.50,91.13 659.00,91.96 661.50,89.15" fill="none" stroke="#d2691e" stroke-width="1.1" stroke-linejoin="round" stroke-linecap="round" />
<polyline points="661.50,89.15 664.00,84.80 666.50,76.04 669.00,70.42 671.50,66.95 674.00,66.70 676.50,67.89 679.00,74.67" fill="none" stroke="#4682b4" stroke-width="1.1" stroke-linejoin="round" stroke-linecap="round" />
<polyline points="679.00,74.67 681.50,82.33 684.00,89.57 686.50,96.17" fill="none" stroke="#d2691e" stroke-width="1.1" stroke-linejoin="round" stroke-linecap="round" />
<rect x="1.70" y="307.30" width="3.80" height="3.90" fill="#ff9a1a" rx="0.5"/>
<rect x="9.40" y="305.40" width="8.20" height="3.80" fill="#2a2a2a" />
<text x="10.00" y="308.50" font-size="3.4" fill="#e8e8e8" stroke="#e8e8e8" stroke-width="0.05" text-anchor="start" font-weight="normal" textLength="7">Hide</text>
<rect x="0.00" y="313.10" width="785.50" height="1.90" fill="#545454" />
<rect x="0.00" y="394.90" width="785.50" height="1.90" fill="#545454" />
<line x1="1.00" y1="329.50" x2="785.00" y2="329.50" stroke="#4c4c4c" stroke-width="0.5" stroke-dasharray="0.8 0.6"/>
<line x1="1.00" y1="349.30" x2="785.00" y2="349.30" stroke="#4c4c4c" stroke-width="0.5" stroke-dasharray="0.8 0.6"/>
<line x1="1.00" y1="369.50" x2="785.00" y2="369.50" stroke="#4c4c4c" stroke-width="0.5" stroke-dasharray="0.8 0.6"/>
<polyline points="0.00,364.50 7.50,360.00 17.50,354.50 25.00,353.25 37.50,352.00 50.00,351.25 62.50,350.00 75.00,349.25 92.50,348.25 105.00,349.50 120.00,350.00 137.50,348.25 150.00,349.00 162.50,349.25 175.00,347.00 187.50,346.50 200.00,348.00 212.50,348.75 225.00,348.75 237.50,348.00 250.00,348.00 257.50,345.00 265.00,338.75 275.00,331.25 285.00,327.00 295.00,324.50 305.00,319.50 315.00,318.00 325.00,319.50 332.50,321.25 342.50,320.00 350.00,319.50 360.00,322.00 370.00,323.75 380.00,327.50 390.00,333.75 400.00,340.00 407.50,340.50 415.00,337.50 425.00,335.00 437.50,334.00 450.00,334.50 462.50,335.75 475.00,336.25 487.50,336.25 500.00,337.00 507.50,338.75 517.50,339.50 530.00,339.50 550.00,337.50 575.00,330.00 600.00,325.00 640.00,322.00 686.00,318.00" fill="none" stroke="#2b5787" stroke-width="1.0" stroke-linejoin="round" stroke-linecap="round" />
<polyline points="0.00,389.50 12.50,391.50 25.00,388.75 37.50,386.25 45.00,383.00 52.50,378.00 62.50,373.75 72.50,368.75 87.50,367.00 102.50,366.25 112.50,363.00 125.00,361.75 140.00,362.50 155.00,362.50 167.50,363.00 175.00,367.50 185.00,371.25 200.00,373.25 212.50,374.25 225.00,373.75 237.50,373.75 250.00,374.25 262.50,374.00 275.00,372.00 285.00,367.50 292.50,363.00 300.00,361.25 310.00,358.75 320.00,353.75 330.00,349.50 340.00,352.50 350.00,356.25 360.00,358.75 370.00,362.50 377.50,364.50 385.00,363.75 392.50,361.25 400.00,359.50 412.50,359.25 425.00,358.00 435.00,356.25 442.50,358.00 450.00,356.25 460.00,353.00 470.00,352.50 480.00,353.75 490.00,355.00 500.00,356.25 510.00,360.00 520.00,363.75 530.00,364.50 540.00,365.50 550.00,365.50 560.00,365.75 570.00,367.00 580.00,367.50 587.50,367.00 595.00,363.75 600.00,360.75 610.00,353.75 620.00,348.75 627.50,345.50 635.00,344.50 650.00,342.50 675.00,343.00 686.25,347.00" fill="none" stroke="#2b5787" stroke-width="1.0" stroke-linejoin="round" stroke-linecap="round" />
<polyline points="0.00,377.50 12.50,373.75 25.00,371.25 37.50,369.25 50.00,365.75 62.50,362.00 75.00,359.25 87.50,358.00 100.00,357.75 112.50,357.00 125.00,356.50 137.50,355.50 150.00,355.50 162.50,356.00 175.00,357.50 187.50,359.50 200.00,360.75 212.50,360.75 225.00,361.25 237.50,361.25 252.50,361.25 260.00,358.75 270.00,353.75 280.00,348.75 290.00,344.50 300.00,341.25 310.00,338.25 320.00,336.25 330.00,335.00 337.50,335.00 345.00,336.25 355.00,338.75 365.00,341.75 375.00,344.50 385.00,346.75 395.00,348.75 400.00,349.50 412.50,349.25 425.00,348.00 437.50,346.50 450.00,345.75 462.50,344.50 475.00,344.50 487.50,345.00 500.00,346.00 510.00,348.75 520.00,350.75 530.00,351.75 540.00,352.50 550.00,353.25 560.00,353.00 570.00,351.25 580.00,349.50 590.00,347.50 600.00,344.50 625.00,337.50 650.00,332.50 686.25,330.00" fill="none" stroke="#d8d23c" stroke-width="1.35" stroke-linejoin="round" stroke-linecap="round" />
<polyline points="0.00,360.00 5.00,360.75 10.00,353.25 13.75,349.50 17.50,353.75 21.25,362.50 25.00,367.00 32.50,365.50 40.00,364.50 45.00,360.00 50.00,355.50 53.75,358.75 58.75,352.00 62.50,351.25 67.50,353.75 72.50,352.50 80.00,353.00 87.50,354.50 95.00,355.50 102.50,356.25 105.00,358.75 108.75,353.75 111.25,353.25 115.00,358.75 120.00,365.00 123.75,361.25 127.50,353.75 132.50,350.00 136.25,348.00 140.00,352.50 145.00,356.25 150.00,359.50 155.00,355.50 160.00,356.25 165.00,353.25 168.75,356.25 172.50,367.50 177.50,372.50 182.50,370.75 187.50,368.00 192.50,367.00 197.50,366.25 200.00,364.50 206.25,369.50 211.25,358.75 215.00,352.50 218.75,353.75 223.75,349.25 227.50,353.25 232.50,353.75 240.00,356.25 245.00,360.00 250.00,352.50 255.00,347.50 260.00,341.25 263.75,331.25 267.50,328.75 275.00,330.00 280.00,332.50 286.25,334.50 291.25,330.00 295.00,326.25 300.00,327.00 305.00,325.75 310.00,325.00 313.75,331.25 318.75,336.25 322.50,343.75 327.50,348.75 332.50,350.00 337.50,353.25 345.00,354.50 350.00,353.75 355.00,350.50 361.25,350.00 365.00,353.75 370.00,355.50 375.00,358.00 380.00,348.75 385.00,340.00 388.75,338.75 392.50,341.25 396.25,343.75 400.00,346.25 406.25,343.75 412.50,341.25 417.50,337.50 421.25,335.00 425.00,337.50 430.00,342.50 435.00,346.25 438.75,356.25 441.25,357.00 445.00,350.00 450.00,348.75 455.00,347.50 462.50,345.75 467.50,343.00 472.50,345.00 477.50,343.75 482.50,353.00 486.25,350.00 490.00,345.50 495.00,346.75 500.00,346.25 505.00,357.50 510.00,363.75 515.00,363.75 521.25,364.50 526.25,358.75 532.50,355.50 540.00,354.50 543.75,350.00 547.50,345.00 555.00,337.50 575.00,332.50 600.00,331.25 660.00,320.00 680.00,340.00 683.00,347.00 686.00,349.00" fill="none" stroke="#178a17" stroke-width="1.0" stroke-linejoin="round" stroke-linecap="round" />
<polyline points="0.00,365.50 7.50,361.25 15.00,355.75 22.50,357.50 30.00,363.00 37.50,366.25 45.00,364.50 52.50,360.00 60.00,356.25 67.50,353.75 75.00,353.00 82.50,354.00 92.50,355.00 102.50,356.00 110.00,357.00 117.50,360.00 125.00,360.75 132.50,357.00 140.00,351.50 147.50,352.50 155.00,356.00 162.50,356.75 170.00,356.25 177.50,363.75 185.00,370.50 192.50,369.50 200.00,367.50 207.50,367.50 215.00,362.50 222.50,355.00 228.75,352.00 236.25,353.00 243.75,356.25 250.00,355.50 257.50,351.25 265.00,341.25 272.50,332.50 277.50,329.50 282.50,331.25 287.50,333.00 295.00,331.25 302.50,328.75 310.00,326.25 317.50,328.75 322.50,333.75 327.50,341.25 332.50,347.50 340.00,352.00 347.50,353.75 355.00,353.00 362.50,351.75 370.00,353.25 377.50,355.50 382.50,352.50 387.50,347.50 393.75,342.50 397.50,341.25 400.00,342.00 407.50,343.75 415.00,343.00 422.50,338.75 427.50,337.50 433.75,339.50 438.75,346.25 445.00,350.00 452.50,351.25 460.00,348.00 467.50,344.50 475.00,345.00 482.50,346.25 490.00,348.25 497.50,348.00 502.50,348.75 507.50,353.75 513.75,360.00 520.00,364.50 525.00,363.00 532.50,359.50 540.00,356.25 547.50,352.00 555.00,347.50 560.00,343.75 575.00,335.00 600.00,330.00 650.00,325.00 686.00,345.00" fill="none" stroke="#e21b1b" stroke-width="1.15" stroke-linejoin="round" stroke-linecap="round" />
<text x="772.00" y="353.80" font-size="2.8" fill="#22c022" stroke="#22c022" stroke-width="0.05" text-anchor="start" font-weight="normal" >31.94</text>
<rect x="0.00" y="415.00" width="785.50" height="0.80" fill="#505050" />
<path d="M0.75 401.25H254.76" stroke="#fa8420" stroke-width="1.5" stroke-dasharray="1.5 1" fill="none"/>
<path d="M255.75 401.25H337.26" stroke="#4496e4" stroke-width="1.5" stroke-dasharray="1.5 1" fill="none"/>
<path d="M338.25 401.25H379.76" stroke="#fa8420" stroke-width="1.5" stroke-dasharray="1.5 1" fill="none"/>
<path d="M380.75 401.25H434.76" stroke="#4496e4" stroke-width="1.5" stroke-dasharray="1.5 1" fill="none"/>
<path d="M435.75 401.25H442.26" stroke="#fa8420" stroke-width="1.5" stroke-dasharray="1.5 1" fill="none"/>
<path d="M443.25 401.25H479.76" stroke="#4496e4" stroke-width="1.5" stroke-dasharray="1.5 1" fill="none"/>
<path d="M480.75 401.25H487.26" stroke="#fa8420" stroke-width="1.5" stroke-dasharray="1.5 1" fill="none"/>
<path d="M488.25 401.25H499.76" stroke="#4496e4" stroke-width="1.5" stroke-dasharray="1.5 1" fill="none"/>
<path d="M500.75 401.25H542.26" stroke="#fa8420" stroke-width="1.5" stroke-dasharray="1.5 1" fill="none"/>
<path d="M543.25 401.25H687.26" stroke="#4496e4" stroke-width="1.5" stroke-dasharray="1.5 1" fill="none"/>
<path d="M0.75 405.9H14.76" stroke="#4496e4" stroke-width="1.5" stroke-dasharray="1.5 1" fill="none"/>
<path d="M15.75 405.9H59.76" stroke="#fa8420" stroke-width="1.5" stroke-dasharray="1.5 1" fill="none"/>
<path d="M60.75 405.9H79.76" stroke="#4496e4" stroke-width="1.5" stroke-dasharray="1.5 1" fill="none"/>
<path d="M80.75 405.9H122.26" stroke="#fa8420" stroke-width="1.5" stroke-dasharray="1.5 1" fill="none"/>
<path d="M123.25 405.9H139.76" stroke="#4496e4" stroke-width="1.5" stroke-dasharray="1.5 1" fill="none"/>
<path d="M140.75 405.9H209.76" stroke="#fa8420" stroke-width="1.5" stroke-dasharray="1.5 1" fill="none"/>
<path d="M210.75 405.9H314.76" stroke="#4496e4" stroke-width="1.5" stroke-dasharray="1.5 1" fill="none"/>
<path d="M315.75 405.9H374.76" stroke="#fa8420" stroke-width="1.5" stroke-dasharray="1.5 1" fill="none"/>
<path d="M375.75 405.9H434.76" stroke="#4496e4" stroke-width="1.5" stroke-dasharray="1.5 1" fill="none"/>
<path d="M435.75 405.9H462.26" stroke="#fa8420" stroke-width="1.5" stroke-dasharray="1.5 1" fill="none"/>
<path d="M463.25 405.9H492.26" stroke="#4496e4" stroke-width="1.5" stroke-dasharray="1.5 1" fill="none"/>
<path d="M493.25 405.9H529.76" stroke="#fa8420" stroke-width="1.5" stroke-dasharray="1.5 1" fill="none"/>
<path d="M530.75 405.9H647.26" stroke="#4496e4" stroke-width="1.5" stroke-dasharray="1.5 1" fill="none"/>
<path d="M648.25 405.9H659.76" stroke="#fa8420" stroke-width="1.5" stroke-dasharray="1.5 1" fill="none"/>
<path d="M660.75 405.9H674.76" stroke="#4496e4" stroke-width="1.5" stroke-dasharray="1.5 1" fill="none"/>
<path d="M675.75 405.9H687.26" stroke="#fa8420" stroke-width="1.5" stroke-dasharray="1.5 1" fill="none"/>
<path d="M0.75 410.9H14.76" stroke="#4496e4" stroke-width="1.5" stroke-dasharray="1.5 1" fill="none"/>
<path d="M15.75 410.9H57.26" stroke="#fa8420" stroke-width="1.5" stroke-dasharray="1.5 1" fill="none"/>
<path d="M58.25 410.9H77.26" stroke="#4496e4" stroke-width="1.5" stroke-dasharray="1.5 1" fill="none"/>
<path d="M78.25 410.9H119.76" stroke="#fa8420" stroke-width="1.5" stroke-dasharray="1.5 1" fill="none"/>
<path d="M120.75 410.9H137.26" stroke="#4496e4" stroke-width="1.5" stroke-dasharray="1.5 1" fill="none"/>
<path d="M138.25 410.9H162.26" stroke="#fa8420" stroke-width="1.5" stroke-dasharray="1.5 1" fill="none"/>
<path d="M163.25 410.9H167.26" stroke="#4496e4" stroke-width="1.5" stroke-dasharray="1.5 1" fill="none"/>
<path d="M168.25 410.9H207.26" stroke="#fa8420" stroke-width="1.5" stroke-dasharray="1.5 1" fill="none"/>
<path d="M208.25 410.9H224.76" stroke="#4496e4" stroke-width="1.5" stroke-dasharray="1.5 1" fill="none"/>
<path d="M225.75 410.9H247.26" stroke="#fa8420" stroke-width="1.5" stroke-dasharray="1.5 1" fill="none"/>
<path d="M248.25 410.9H312.26" stroke="#4496e4" stroke-width="1.5" stroke-dasharray="1.5 1" fill="none"/>
<path d="M313.25 410.9H352.26" stroke="#fa8420" stroke-width="1.5" stroke-dasharray="1.5 1" fill="none"/>
<path d="M353.25 410.9H359.76" stroke="#4496e4" stroke-width="1.5" stroke-dasharray="1.5 1" fill="none"/>
<path d="M360.75 410.9H372.26" stroke="#fa8420" stroke-width="1.5" stroke-dasharray="1.5 1" fill="none"/>
<path d="M373.25 410.9H427.26" stroke="#4496e4" stroke-width="1.5" stroke-dasharray="1.5 1" fill="none"/>
<path d="M428.25 410.9H442.26" stroke="#fa8420" stroke-width="1.5" stroke-dasharray="1.5 1" fill="none"/>
<path d="M443.25 410.9H449.76" stroke="#4496e4" stroke-width="1.5" stroke-dasharray="1.5 1" fill="none"/>
<path d="M450.75 410.9H462.26" stroke="#fa8420" stroke-width="1.5" stroke-dasharray="1.5 1" fill="none"/>
<path d="M463.25 410.9H477.26" stroke="#4496e4" stroke-width="1.5" stroke-dasharray="1.5 1" fill="none"/>
<path d="M478.25 410.9H484.76" stroke="#fa8420" stroke-width="1.5" stroke-dasharray="1.5 1" fill="none"/>
<path d="M485.75 410.9H494.76" stroke="#4496e4" stroke-width="1.5" stroke-dasharray="1.5 1" fill="none"/>
<path d="M495.75 410.9H524.76" stroke="#fa8420" stroke-width="1.5" stroke-dasharray="1.5 1" fill="none"/>
<path d="M525.75 410.9H587.26" stroke="#4496e4" stroke-width="1.5" stroke-dasharray="1.5 1" fill="none"/>
<path d="M588.25 410.9H607.26" stroke="#fa8420" stroke-width="1.5" stroke-dasharray="1.5 1" fill="none"/>
<path d="M608.25 410.9H637.26" stroke="#4496e4" stroke-width="1.5" stroke-dasharray="1.5 1" fill="none"/>
<path d="M638.25 410.9H642.26" stroke="#fa8420" stroke-width="1.5" stroke-dasharray="1.5 1" fill="none"/>
<path d="M643.25 410.9H644.76" stroke="#4496e4" stroke-width="1.5" stroke-dasharray="1.5 1" fill="none"/>
<path d="M645.75 410.9H659.76" stroke="#fa8420" stroke-width="1.5" stroke-dasharray="1.5 1" fill="none"/>
<path d="M660.75 410.9H672.26" stroke="#4496e4" stroke-width="1.5" stroke-dasharray="1.5 1" fill="none"/>
<path d="M673.25 410.9H687.26" stroke="#fa8420" stroke-width="1.5" stroke-dasharray="1.5 1" fill="none"/>
<rect x="15.10" y="404.60" width="2.80" height="2.80" fill="#323232" />
<path d="M16.50 402.6 V405" stroke="#1a120c" stroke-width="1.1" fill="none"/>
<path d="M16.50 404.6 V408.4 M13.80 405.8 L16.50 408.6 L19.20 405.8" stroke="#fa8420" stroke-width="1.15" fill="none" stroke-linejoin="round"/>
<rect x="60.10" y="404.60" width="2.80" height="2.80" fill="#323232" />
<path d="M61.50 404.4 V409.2" stroke="#4496e4" stroke-width="1.15" fill="none"/>
<path d="M58.80 405.7 L61.50 403 L64.20 405.7" stroke="#0c0c0c" stroke-width="1.2" fill="none" stroke-linejoin="round"/>
<rect x="80.10" y="404.60" width="2.80" height="2.80" fill="#323232" />
<path d="M81.50 402.6 V405" stroke="#1a120c" stroke-width="1.1" fill="none"/>
<path d="M81.50 404.6 V408.4 M78.80 405.8 L81.50 408.6 L84.20 405.8" stroke="#fa8420" stroke-width="1.15" fill="none" stroke-linejoin="round"/>
<rect x="122.60" y="404.60" width="2.80" height="2.80" fill="#323232" />
<path d="M124.00 404.4 V409.2" stroke="#4496e4" stroke-width="1.15" fill="none"/>
<path d="M121.30 405.7 L124.00 403 L126.70 405.7" stroke="#0c0c0c" stroke-width="1.2" fill="none" stroke-linejoin="round"/>
<rect x="140.10" y="404.60" width="2.80" height="2.80" fill="#323232" />
<path d="M141.50 402.6 V405" stroke="#1a120c" stroke-width="1.1" fill="none"/>
<path d="M141.50 404.6 V408.4 M138.80 405.8 L141.50 408.6 L144.20 405.8" stroke="#fa8420" stroke-width="1.15" fill="none" stroke-linejoin="round"/>
<rect x="210.10" y="404.60" width="2.80" height="2.80" fill="#323232" />
<path d="M211.50 404.4 V409.2" stroke="#4496e4" stroke-width="1.15" fill="none"/>
<path d="M208.80 405.7 L211.50 403 L214.20 405.7" stroke="#0c0c0c" stroke-width="1.2" fill="none" stroke-linejoin="round"/>
<rect x="315.10" y="404.60" width="2.80" height="2.80" fill="#323232" />
<path d="M316.50 402.6 V405" stroke="#1a120c" stroke-width="1.1" fill="none"/>
<path d="M316.50 404.6 V408.4 M313.80 405.8 L316.50 408.6 L319.20 405.8" stroke="#fa8420" stroke-width="1.15" fill="none" stroke-linejoin="round"/>
<rect x="375.10" y="404.60" width="2.80" height="2.80" fill="#323232" />
<path d="M376.50 404.4 V409.2" stroke="#4496e4" stroke-width="1.15" fill="none"/>
<path d="M373.80 405.7 L376.50 403 L379.20 405.7" stroke="#0c0c0c" stroke-width="1.2" fill="none" stroke-linejoin="round"/>
<rect x="427.60" y="404.60" width="2.80" height="2.80" fill="#323232" />
<path d="M429.00 402.6 V405" stroke="#1a120c" stroke-width="1.1" fill="none"/>
<path d="M429.00 404.6 V408.4 M426.30 405.8 L429.00 408.6 L431.70 405.8" stroke="#fa8420" stroke-width="1.15" fill="none" stroke-linejoin="round"/>
<rect x="445.10" y="404.60" width="2.80" height="2.80" fill="#323232" />
<path d="M446.50 404.4 V409.2" stroke="#4496e4" stroke-width="1.15" fill="none"/>
<path d="M443.80 405.7 L446.50 403 L449.20 405.7" stroke="#0c0c0c" stroke-width="1.2" fill="none" stroke-linejoin="round"/>
<rect x="492.60" y="404.60" width="2.80" height="2.80" fill="#323232" />
<path d="M494.00 402.6 V405" stroke="#1a120c" stroke-width="1.1" fill="none"/>
<path d="M494.00 404.6 V408.4 M491.30 405.8 L494.00 408.6 L496.70 405.8" stroke="#fa8420" stroke-width="1.15" fill="none" stroke-linejoin="round"/>
<rect x="540.10" y="404.60" width="2.80" height="2.80" fill="#323232" />
<path d="M541.50 404.4 V409.2" stroke="#4496e4" stroke-width="1.15" fill="none"/>
<path d="M538.80 405.7 L541.50 403 L544.20 405.7" stroke="#0c0c0c" stroke-width="1.2" fill="none" stroke-linejoin="round"/>
<rect x="675.10" y="404.60" width="2.80" height="2.80" fill="#323232" />
<path d="M676.50 402.6 V405" stroke="#1a120c" stroke-width="1.1" fill="none"/>
<path d="M676.50 404.6 V408.4 M673.80 405.8 L676.50 408.6 L679.20 405.8" stroke="#fa8420" stroke-width="1.15" fill="none" stroke-linejoin="round"/>
<text x="783.00" y="401.20" font-size="2.9" fill="#555" stroke="#555" stroke-width="0.05" text-anchor="end" font-weight="normal" >Buying</text>
<text x="783.00" y="407.60" font-size="2.9" fill="#555" stroke="#555" stroke-width="0.05" text-anchor="end" font-weight="normal" >Selling</text>
<rect x="0.00" y="416.60" width="786.00" height="0.70" fill="#505050" />
<rect x="0.00" y="417.30" width="786.00" height="8.20" fill="#363636" />
<line x1="1.00" y1="426.60" x2="785.00" y2="426.60" stroke="#6a6a6a" stroke-width="0.5" stroke-dasharray="0.6 0.6"/>
<text x="4.00" y="422.10" font-size="3.7" fill="#565656" stroke="#565656" stroke-width="0.05" text-anchor="start" font-weight="bold" textLength="12.6" lengthAdjust="spacingAndGlyphs">EURUSD</text>
<text x="20.00" y="422.10" font-size="3.7" fill="#565656" stroke="#565656" stroke-width="0.05" text-anchor="start" font-weight="bold" textLength="12.6" lengthAdjust="spacingAndGlyphs">USDJPY</text>
<text x="36.00" y="422.10" font-size="3.7" fill="#565656" stroke="#565656" stroke-width="0.05" text-anchor="start" font-weight="bold" textLength="12.6" lengthAdjust="spacingAndGlyphs">EURJPY</text>
<text x="52.00" y="422.10" font-size="3.7" fill="#565656" stroke="#565656" stroke-width="0.05" text-anchor="start" font-weight="bold" textLength="12.6" lengthAdjust="spacingAndGlyphs">AUDUSD</text>
<text x="68.00" y="422.10" font-size="3.7" fill="#565656" stroke="#565656" stroke-width="0.05" text-anchor="start" font-weight="bold" textLength="12.6" lengthAdjust="spacingAndGlyphs">GBPUSD</text>
<text x="84.00" y="422.10" font-size="3.7" fill="#565656" stroke="#565656" stroke-width="0.05" text-anchor="start" font-weight="bold" textLength="12.6" lengthAdjust="spacingAndGlyphs">GBPJPY</text>
<text x="100.00" y="422.10" font-size="3.7" fill="#565656" stroke="#565656" stroke-width="0.05" text-anchor="start" font-weight="bold" textLength="12.6" lengthAdjust="spacingAndGlyphs">EURNZD</text>
<text x="116.00" y="422.10" font-size="3.7" fill="#565656" stroke="#565656" stroke-width="0.05" text-anchor="start" font-weight="bold" textLength="12.6" lengthAdjust="spacingAndGlyphs">CADCHF</text>
<text x="132.00" y="422.10" font-size="3.7" fill="#565656" stroke="#565656" stroke-width="0.05" text-anchor="start" font-weight="bold" textLength="12.6" lengthAdjust="spacingAndGlyphs">CADJPY</text>
<text x="148.00" y="422.10" font-size="3.7" fill="#565656" stroke="#565656" stroke-width="0.05" text-anchor="start" font-weight="bold" textLength="12.6" lengthAdjust="spacingAndGlyphs">EURGBP</text>
<text x="164.00" y="422.10" font-size="3.7" fill="#565656" stroke="#565656" stroke-width="0.05" text-anchor="start" font-weight="bold" textLength="12.6" lengthAdjust="spacingAndGlyphs">USDCAD</text>
<text x="180.00" y="422.10" font-size="3.7" fill="#565656" stroke="#565656" stroke-width="0.05" text-anchor="start" font-weight="bold" textLength="12.6" lengthAdjust="spacingAndGlyphs">USDCHF</text>
<text x="196.00" y="422.10" font-size="3.7" fill="#565656" stroke="#565656" stroke-width="0.05" text-anchor="start" font-weight="bold" textLength="12.6" lengthAdjust="spacingAndGlyphs">EURCHF</text>
<text x="212.00" y="422.10" font-size="3.7" fill="#565656" stroke="#565656" stroke-width="0.05" text-anchor="start" font-weight="bold" textLength="12.6" lengthAdjust="spacingAndGlyphs">GBPCAD</text>
<text x="228.00" y="422.10" font-size="3.7" fill="#565656" stroke="#565656" stroke-width="0.05" text-anchor="start" font-weight="bold" textLength="12.6" lengthAdjust="spacingAndGlyphs">NZDCAD</text>
<text x="244.00" y="422.10" font-size="3.7" fill="#565656" stroke="#565656" stroke-width="0.05" text-anchor="start" font-weight="bold" textLength="12.6" lengthAdjust="spacingAndGlyphs">GBPAUD</text>
<text x="260.00" y="422.10" font-size="3.7" fill="#565656" stroke="#565656" stroke-width="0.05" text-anchor="start" font-weight="bold" textLength="12.6" lengthAdjust="spacingAndGlyphs">GBPNZD</text>
<text x="276.00" y="422.10" font-size="3.7" fill="#565656" stroke="#565656" stroke-width="0.05" text-anchor="start" font-weight="bold" textLength="12.6" lengthAdjust="spacingAndGlyphs">NZDCHF</text>
<text x="292.00" y="422.10" font-size="3.7" fill="#ff9a1a" stroke="#ff9a1a" stroke-width="0.05" text-anchor="start" font-weight="bold" textLength="12.6" lengthAdjust="spacingAndGlyphs">NZDUSD</text>
<text x="308.00" y="422.10" font-size="3.7" fill="#565656" stroke="#565656" stroke-width="0.05" text-anchor="start" font-weight="bold" textLength="12.6" lengthAdjust="spacingAndGlyphs">NZDJPY</text>
<text x="324.00" y="422.10" font-size="3.7" fill="#565656" stroke="#565656" stroke-width="0.05" text-anchor="start" font-weight="bold" textLength="12.6" lengthAdjust="spacingAndGlyphs">EURCAD</text>
<text x="340.00" y="422.10" font-size="3.7" fill="#565656" stroke="#565656" stroke-width="0.05" text-anchor="start" font-weight="bold" textLength="12.6" lengthAdjust="spacingAndGlyphs">CHFJPY</text>
<text x="356.00" y="422.10" font-size="3.7" fill="#565656" stroke="#565656" stroke-width="0.05" text-anchor="start" font-weight="bold" textLength="12.6" lengthAdjust="spacingAndGlyphs">AUDJPY</text>
<text x="372.00" y="422.10" font-size="3.7" fill="#565656" stroke="#565656" stroke-width="0.05" text-anchor="start" font-weight="bold" textLength="12.6" lengthAdjust="spacingAndGlyphs">AUDCHF</text>
<text x="388.00" y="422.10" font-size="3.7" fill="#565656" stroke="#565656" stroke-width="0.05" text-anchor="start" font-weight="bold" textLength="12.6" lengthAdjust="spacingAndGlyphs">AUDCAD</text>
<text x="404.00" y="422.10" font-size="3.7" fill="#565656" stroke="#565656" stroke-width="0.05" text-anchor="start" font-weight="bold" textLength="12.6" lengthAdjust="spacingAndGlyphs">AUDNZD</text>
<text x="420.00" y="422.10" font-size="3.7" fill="#565656" stroke="#565656" stroke-width="0.05" text-anchor="start" font-weight="bold" textLength="12.6" lengthAdjust="spacingAndGlyphs">GBPCHF</text>
<text x="436.00" y="422.10" font-size="3.7" fill="#565656" stroke="#565656" stroke-width="0.05" text-anchor="start" font-weight="bold" textLength="12.6" lengthAdjust="spacingAndGlyphs">EURAUD</text>
<text x="452.00" y="422.10" font-size="3.7" fill="#565656" stroke="#565656" stroke-width="0.05" text-anchor="start" font-weight="bold" textLength="16.8" lengthAdjust="spacingAndGlyphs">XAUUSD-g</text>
<text x="472.20" y="422.10" font-size="3.7" fill="#565656" stroke="#565656" stroke-width="0.05" text-anchor="start" font-weight="bold" textLength="12.6" lengthAdjust="spacingAndGlyphs">BTCUSD</text>
<text x="488.20" y="422.10" font-size="3.7" fill="#565656" stroke="#565656" stroke-width="0.05" text-anchor="start" font-weight="bold" textLength="12.6" lengthAdjust="spacingAndGlyphs">XBRUSD</text>
<text x="504.20" y="422.10" font-size="3.7" fill="#565656" stroke="#565656" stroke-width="0.05" text-anchor="start" font-weight="bold" textLength="16.8" lengthAdjust="spacingAndGlyphs">AUS200-g</text>
<text x="524.40" y="422.10" font-size="3.7" fill="#565656" stroke="#565656" stroke-width="0.05" text-anchor="start" font-weight="bold" textLength="16.8" lengthAdjust="spacingAndGlyphs">AUD200-g</text>
<text x="544.60" y="422.10" font-size="3.7" fill="#565656" stroke="#565656" stroke-width="0.05" text-anchor="start" font-weight="bold" textLength="16.8" lengthAdjust="spacingAndGlyphs">BDXUSD-g</text>
<text x="564.80" y="422.10" font-size="3.7" fill="#565656" stroke="#565656" stroke-width="0.05" text-anchor="start" font-weight="bold" textLength="18.9" lengthAdjust="spacingAndGlyphs">ESXXUSD-g</text>
<text x="2.30" y="431.00" font-size="3.2" fill="#7c7c7c" stroke="#7c7c7c" stroke-width="0.05" text-anchor="start" font-weight="normal" textLength="15.9" lengthAdjust="spacingAndGlyphs">26 May 2023</text>
<text x="22.30" y="431.00" font-size="3.2" fill="#7c7c7c" stroke="#7c7c7c" stroke-width="0.05" text-anchor="start" font-weight="normal" textLength="17.4" lengthAdjust="spacingAndGlyphs">26 May 17:00</text>
<text x="42.30" y="431.00" font-size="3.2" fill="#7c7c7c" stroke="#7c7c7c" stroke-width="0.05" text-anchor="start" font-weight="normal" textLength="17.4" lengthAdjust="spacingAndGlyphs">29 May 01:00</text>
<text x="62.30" y="431.00" font-size="3.2" fill="#7c7c7c" stroke="#7c7c7c" stroke-width="0.05" text-anchor="start" font-weight="normal" textLength="17.4" lengthAdjust="spacingAndGlyphs">29 May 09:00</text>
<text x="82.30" y="431.00" font-size="3.2" fill="#7c7c7c" stroke="#7c7c7c" stroke-width="0.05" text-anchor="start" font-weight="normal" textLength="17.4" lengthAdjust="spacingAndGlyphs">29 May 17:00</text>
<text x="102.30" y="431.00" font-size="3.2" fill="#7c7c7c" stroke="#7c7c7c" stroke-width="0.05" text-anchor="start" font-weight="normal" textLength="17.4" lengthAdjust="spacingAndGlyphs">30 May 01:00</text>
<text x="122.30" y="431.00" font-size="3.2" fill="#7c7c7c" stroke="#7c7c7c" stroke-width="0.05" text-anchor="start" font-weight="normal" textLength="17.4" lengthAdjust="spacingAndGlyphs">30 May 09:00</text>
<text x="142.30" y="431.00" font-size="3.2" fill="#7c7c7c" stroke="#7c7c7c" stroke-width="0.05" text-anchor="start" font-weight="normal" textLength="17.4" lengthAdjust="spacingAndGlyphs">30 May 17:00</text>
<text x="162.30" y="431.00" font-size="3.2" fill="#7c7c7c" stroke="#7c7c7c" stroke-width="0.05" text-anchor="start" font-weight="normal" textLength="17.4" lengthAdjust="spacingAndGlyphs">31 May 01:00</text>
<text x="182.30" y="431.00" font-size="3.2" fill="#7c7c7c" stroke="#7c7c7c" stroke-width="0.05" text-anchor="start" font-weight="normal" textLength="17.4" lengthAdjust="spacingAndGlyphs">31 May 09:00</text>
<text x="202.30" y="431.00" font-size="3.2" fill="#7c7c7c" stroke="#7c7c7c" stroke-width="0.05" text-anchor="start" font-weight="normal" textLength="17.4" lengthAdjust="spacingAndGlyphs">31 May 17:00</text>
<text x="222.30" y="431.00" font-size="3.2" fill="#7c7c7c" stroke="#7c7c7c" stroke-width="0.05" text-anchor="start" font-weight="normal" textLength="15.9" lengthAdjust="spacingAndGlyphs">1 Jun 01:00</text>
<text x="242.30" y="431.00" font-size="3.2" fill="#7c7c7c" stroke="#7c7c7c" stroke-width="0.05" text-anchor="start" font-weight="normal" textLength="15.9" lengthAdjust="spacingAndGlyphs">1 Jun 09:00</text>
<text x="262.30" y="431.00" font-size="3.2" fill="#7c7c7c" stroke="#7c7c7c" stroke-width="0.05" text-anchor="start" font-weight="normal" textLength="15.9" lengthAdjust="spacingAndGlyphs">1 Jun 17:00</text>
<text x="282.30" y="431.00" font-size="3.2" fill="#7c7c7c" stroke="#7c7c7c" stroke-width="0.05" text-anchor="start" font-weight="normal" textLength="15.9" lengthAdjust="spacingAndGlyphs">2 Jun 01:00</text>
<text x="302.30" y="431.00" font-size="3.2" fill="#7c7c7c" stroke="#7c7c7c" stroke-width="0.05" text-anchor="start" font-weight="normal" textLength="15.9" lengthAdjust="spacingAndGlyphs">2 Jun 09:00</text>
<text x="322.30" y="431.00" font-size="3.2" fill="#7c7c7c" stroke="#7c7c7c" stroke-width="0.05" text-anchor="start" font-weight="normal" textLength="15.9" lengthAdjust="spacingAndGlyphs">2 Jun 17:00</text>
<text x="342.30" y="431.00" font-size="3.2" fill="#7c7c7c" stroke="#7c7c7c" stroke-width="0.05" text-anchor="start" font-weight="normal" textLength="15.9" lengthAdjust="spacingAndGlyphs">5 Jun 01:00</text>
<text x="362.30" y="431.00" font-size="3.2" fill="#7c7c7c" stroke="#7c7c7c" stroke-width="0.05" text-anchor="start" font-weight="normal" textLength="15.9" lengthAdjust="spacingAndGlyphs">5 Jun 09:00</text>
<text x="382.30" y="431.00" font-size="3.2" fill="#7c7c7c" stroke="#7c7c7c" stroke-width="0.05" text-anchor="start" font-weight="normal" textLength="15.9" lengthAdjust="spacingAndGlyphs">5 Jun 17:00</text>
<text x="402.30" y="431.00" font-size="3.2" fill="#7c7c7c" stroke="#7c7c7c" stroke-width="0.05" text-anchor="start" font-weight="normal" textLength="15.9" lengthAdjust="spacingAndGlyphs">6 Jun 01:00</text>
<text x="422.30" y="431.00" font-size="3.2" fill="#7c7c7c" stroke="#7c7c7c" stroke-width="0.05" text-anchor="start" font-weight="normal" textLength="15.9" lengthAdjust="spacingAndGlyphs">6 Jun 09:00</text>
<text x="442.30" y="431.00" font-size="3.2" fill="#7c7c7c" stroke="#7c7c7c" stroke-width="0.05" text-anchor="start" font-weight="normal" textLength="15.9" lengthAdjust="spacingAndGlyphs">6 Jun 17:00</text>
<text x="462.30" y="431.00" font-size="3.2" fill="#7c7c7c" stroke="#7c7c7c" stroke-width="0.05" text-anchor="start" font-weight="normal" textLength="15.9" lengthAdjust="spacingAndGlyphs">7 Jun 01:00</text>
<text x="482.30" y="431.00" font-size="3.2" fill="#7c7c7c" stroke="#7c7c7c" stroke-width="0.05" text-anchor="start" font-weight="normal" textLength="15.9" lengthAdjust="spacingAndGlyphs">7 Jun 09:00</text>
<text x="502.30" y="431.00" font-size="3.2" fill="#7c7c7c" stroke="#7c7c7c" stroke-width="0.05" text-anchor="start" font-weight="normal" textLength="15.9" lengthAdjust="spacingAndGlyphs">7 Jun 17:00</text>
<text x="522.30" y="431.00" font-size="3.2" fill="#7c7c7c" stroke="#7c7c7c" stroke-width="0.05" text-anchor="start" font-weight="normal" textLength="15.9" lengthAdjust="spacingAndGlyphs">8 Jun 01:00</text>
<text x="542.30" y="431.00" font-size="3.2" fill="#7c7c7c" stroke="#7c7c7c" stroke-width="0.05" text-anchor="start" font-weight="normal" textLength="15.9" lengthAdjust="spacingAndGlyphs">8 Jun 09:00</text>
<text x="562.30" y="431.00" font-size="3.2" fill="#7c7c7c" stroke="#7c7c7c" stroke-width="0.05" text-anchor="start" font-weight="normal" textLength="15.9" lengthAdjust="spacingAndGlyphs">8 Jun 17:00</text>
<text x="582.30" y="431.00" font-size="3.2" fill="#7c7c7c" stroke="#7c7c7c" stroke-width="0.05" text-anchor="start" font-weight="normal" textLength="15.9" lengthAdjust="spacingAndGlyphs">9 Jun 01:00</text>
<text x="602.30" y="431.00" font-size="3.2" fill="#7c7c7c" stroke="#7c7c7c" stroke-width="0.05" text-anchor="start" font-weight="normal" textLength="15.9" lengthAdjust="spacingAndGlyphs">9 Jun 09:00</text>
<text x="622.30" y="431.00" font-size="3.2" fill="#7c7c7c" stroke="#7c7c7c" stroke-width="0.05" text-anchor="start" font-weight="normal" textLength="15.9" lengthAdjust="spacingAndGlyphs">9 Jun 17:00</text>
<text x="642.30" y="431.00" font-size="3.2" fill="#7c7c7c" stroke="#7c7c7c" stroke-width="0.05" text-anchor="start" font-weight="normal" textLength="17.4" lengthAdjust="spacingAndGlyphs">12 Jun 01:00</text>
<text x="662.30" y="431.00" font-size="3.2" fill="#7c7c7c" stroke="#7c7c7c" stroke-width="0.05" text-anchor="start" font-weight="normal" textLength="17.4" lengthAdjust="spacingAndGlyphs">12 Jun 09:00</text>
<text x="682.30" y="431.00" font-size="3.2" fill="#7c7c7c" stroke="#7c7c7c" stroke-width="0.05" text-anchor="start" font-weight="normal" textLength="17.4" lengthAdjust="spacingAndGlyphs">12 Jun 17:00</text>
<rect x="784.40" y="14.30" width="1.40" height="419.30" fill="#4a4a4a" />
<rect x="798.90" y="14.30" width="11.00" height="419.30" fill="#505050" />
<line x1="785.40" y1="21.30" x2="786.60" y2="21.30" stroke="#555" stroke-width="0.4" />
<text x="787.40" y="22.40" font-size="3" fill="#555" stroke="#555" stroke-width="0.05" text-anchor="start" font-weight="normal" textLength="11">0.61735</text>
<line x1="785.40" y1="31.65" x2="786.60" y2="31.65" stroke="#555" stroke-width="0.4" />
<text x="787.40" y="32.75" font-size="3" fill="#555" stroke="#555" stroke-width="0.05" text-anchor="start" font-weight="normal" textLength="11">0.61665</text>
<line x1="785.40" y1="42.00" x2="786.60" y2="42.00" stroke="#555" stroke-width="0.4" />
<text x="787.40" y="43.10" font-size="3" fill="#555" stroke="#555" stroke-width="0.05" text-anchor="start" font-weight="normal" textLength="11">0.61595</text>
<line x1="785.40" y1="52.35" x2="786.60" y2="52.35" stroke="#555" stroke-width="0.4" />
<text x="787.40" y="53.45" font-size="3" fill="#555" stroke="#555" stroke-width="0.05" text-anchor="start" font-weight="normal" textLength="11">0.61525</text>
<line x1="785.40" y1="62.70" x2="786.60" y2="62.70" stroke="#555" stroke-width="0.4" />
<text x="787.40" y="63.80" font-size="3" fill="#555" stroke="#555" stroke-width="0.05" text-anchor="start" font-weight="normal" textLength="11">0.61455</text>
<line x1="785.40" y1="73.05" x2="786.60" y2="73.05" stroke="#555" stroke-width="0.4" />
<text x="787.40" y="74.15" font-size="3" fill="#555" stroke="#555" stroke-width="0.05" text-anchor="start" font-weight="normal" textLength="11">0.61385</text>
<line x1="785.40" y1="83.40" x2="786.60" y2="83.40" stroke="#555" stroke-width="0.4" />
<text x="787.40" y="84.50" font-size="3" fill="#555" stroke="#555" stroke-width="0.05" text-anchor="start" font-weight="normal" textLength="11">0.61315</text>
<line x1="785.40" y1="93.75" x2="786.60" y2="93.75" stroke="#555" stroke-width="0.4" />
<text x="787.40" y="94.85" font-size="3" fill="#555" stroke="#555" stroke-width="0.05" text-anchor="start" font-weight="normal" textLength="11">0.61245</text>
<line x1="785.40" y1="104.10" x2="786.60" y2="104.10" stroke="#555" stroke-width="0.4" />
<text x="787.40" y="105.20" font-size="3" fill="#555" stroke="#555" stroke-width="0.05" text-anchor="start" font-weight="normal" textLength="11">0.61175</text>
<line x1="785.40" y1="114.45" x2="786.60" y2="114.45" stroke="#555" stroke-width="0.4" />
<text x="787.40" y="115.55" font-size="3" fill="#555" stroke="#555" stroke-width="0.05" text-anchor="start" font-weight="normal" textLength="11">0.61105</text>
<line x1="785.40" y1="124.80" x2="786.60" y2="124.80" stroke="#555" stroke-width="0.4" />
<text x="787.40" y="125.90" font-size="3" fill="#555" stroke="#555" stroke-width="0.05" text-anchor="start" font-weight="normal" textLength="11">0.61035</text>
<line x1="785.40" y1="135.15" x2="786.60" y2="135.15" stroke="#555" stroke-width="0.4" />
<text x="787.40" y="136.25" font-size="3" fill="#555" stroke="#555" stroke-width="0.05" text-anchor="start" font-weight="normal" textLength="11">0.60965</text>
<line x1="785.40" y1="145.50" x2="786.60" y2="145.50" stroke="#555" stroke-width="0.4" />
<text x="787.40" y="146.60" font-size="3" fill="#555" stroke="#555" stroke-width="0.05" text-anchor="start" font-weight="normal" textLength="11">0.60895</text>
<line x1="785.40" y1="155.85" x2="786.60" y2="155.85" stroke="#555" stroke-width="0.4" />
<text x="787.40" y="156.95" font-size="3" fill="#555" stroke="#555" stroke-width="0.05" text-anchor="start" font-weight="normal" textLength="11">0.60825</text>
<line x1="785.40" y1="166.20" x2="786.60" y2="166.20" stroke="#555" stroke-width="0.4" />
<text x="787.40" y="167.30" font-size="3" fill="#555" stroke="#555" stroke-width="0.05" text-anchor="start" font-weight="normal" textLength="11">0.60755</text>
<line x1="785.40" y1="176.55" x2="786.60" y2="176.55" stroke="#555" stroke-width="0.4" />
<text x="787.40" y="177.65" font-size="3" fill="#555" stroke="#555" stroke-width="0.05" text-anchor="start" font-weight="normal" textLength="11">0.60685</text>
<line x1="785.40" y1="186.90" x2="786.60" y2="186.90" stroke="#555" stroke-width="0.4" />
<text x="787.40" y="188.00" font-size="3" fill="#555" stroke="#555" stroke-width="0.05" text-anchor="start" font-weight="normal" textLength="11">0.60615</text>
<line x1="785.40" y1="197.25" x2="786.60" y2="197.25" stroke="#555" stroke-width="0.4" />
<text x="787.40" y="198.35" font-size="3" fill="#555" stroke="#555" stroke-width="0.05" text-anchor="start" font-weight="normal" textLength="11">0.60545</text>
<line x1="785.40" y1="207.60" x2="786.60" y2="207.60" stroke="#555" stroke-width="0.4" />
<text x="787.40" y="208.70" font-size="3" fill="#555" stroke="#555" stroke-width="0.05" text-anchor="start" font-weight="normal" textLength="11">0.60475</text>
<line x1="785.40" y1="217.95" x2="786.60" y2="217.95" stroke="#555" stroke-width="0.4" />
<text x="787.40" y="219.05" font-size="3" fill="#555" stroke="#555" stroke-width="0.05" text-anchor="start" font-weight="normal" textLength="11">0.60405</text>
<line x1="785.40" y1="228.30" x2="786.60" y2="228.30" stroke="#555" stroke-width="0.4" />
<text x="787.40" y="229.40" font-size="3" fill="#555" stroke="#555" stroke-width="0.05" text-anchor="start" font-weight="normal" textLength="11">0.60335</text>
<line x1="785.40" y1="238.65" x2="786.60" y2="238.65" stroke="#555" stroke-width="0.4" />
<text x="787.40" y="239.75" font-size="3" fill="#555" stroke="#555" stroke-width="0.05" text-anchor="start" font-weight="normal" textLength="11">0.60265</text>
<line x1="785.40" y1="249.00" x2="786.60" y2="249.00" stroke="#555" stroke-width="0.4" />
<text x="787.40" y="250.10" font-size="3" fill="#555" stroke="#555" stroke-width="0.05" text-anchor="start" font-weight="normal" textLength="11">0.60195</text>
<line x1="785.40" y1="259.35" x2="786.60" y2="259.35" stroke="#555" stroke-width="0.4" />
<text x="787.40" y="260.45" font-size="3" fill="#555" stroke="#555" stroke-width="0.05" text-anchor="start" font-weight="normal" textLength="11">0.60125</text>
<line x1="785.40" y1="269.70" x2="786.60" y2="269.70" stroke="#555" stroke-width="0.4" />
<text x="787.40" y="270.80" font-size="3" fill="#555" stroke="#555" stroke-width="0.05" text-anchor="start" font-weight="normal" textLength="11">0.60055</text>
<line x1="785.40" y1="280.05" x2="786.60" y2="280.05" stroke="#555" stroke-width="0.4" />
<text x="787.40" y="281.15" font-size="3" fill="#555" stroke="#555" stroke-width="0.05" text-anchor="start" font-weight="normal" textLength="11">0.59985</text>
<line x1="785.40" y1="290.40" x2="786.60" y2="290.40" stroke="#555" stroke-width="0.4" />
<text x="787.40" y="291.50" font-size="3" fill="#555" stroke="#555" stroke-width="0.05" text-anchor="start" font-weight="normal" textLength="11">0.59915</text>
<line x1="785.40" y1="300.75" x2="786.60" y2="300.75" stroke="#555" stroke-width="0.4" />
<text x="787.40" y="301.85" font-size="3" fill="#555" stroke="#555" stroke-width="0.05" text-anchor="start" font-weight="normal" textLength="11">0.59845</text>
<line x1="785.40" y1="311.10" x2="786.60" y2="311.10" stroke="#555" stroke-width="0.4" />
<text x="787.40" y="312.20" font-size="3" fill="#555" stroke="#555" stroke-width="0.05" text-anchor="start" font-weight="normal" textLength="11">0.59775</text>
<rect x="793.20" y="98.40" width="6.80" height="4.40" fill="#5c5c5c" />
<text x="787.40" y="321.50" font-size="2.9" fill="#555" stroke="#555" stroke-width="0.05" text-anchor="start" font-weight="normal" >100</text>
<text x="787.40" y="350.00" font-size="2.9" fill="#555" stroke="#555" stroke-width="0.05" text-anchor="start" font-weight="normal" >68</text>
<text x="787.40" y="370.30" font-size="2.9" fill="#555" stroke="#555" stroke-width="0.05" text-anchor="start" font-weight="normal" >32</text>
<text x="787.40" y="393.00" font-size="2.9" fill="#555" stroke="#555" stroke-width="0.05" text-anchor="start" font-weight="normal" >0</text>
<text x="782.50" y="22.30" font-size="5.1" fill="#ff9a1a" stroke="#ff9a1a" stroke-width="0.05" text-anchor="end" font-weight="bold" textLength="18.5">Pips 0.0</text>
<text x="759.50" y="30.60" font-size="3.6" fill="#5a5a5a" stroke="#5a5a5a" stroke-width="0.05" text-anchor="end" font-weight="normal" >ASK</text>
<text x="781.50" y="30.60" font-size="3.6" fill="#505050" stroke="#505050" stroke-width="0.05" text-anchor="end" font-weight="normal" >0.61172</text>
<text x="759.50" y="35.80" font-size="3.6" fill="#5a5a5a" stroke="#5a5a5a" stroke-width="0.05" text-anchor="end" font-weight="normal" >BID</text>
<text x="781.50" y="35.80" font-size="3.6" fill="#111" stroke="#111" stroke-width="0.05" text-anchor="end" font-weight="normal" >0.61147</text>
<line x1="739.00" y1="37.60" x2="782.50" y2="37.60" stroke="#5a5a5a" stroke-width="0.5" />
<text x="767.00" y="40.90" font-size="3.4" fill="#5a5a5a" stroke="#5a5a5a" stroke-width="0.05" text-anchor="end" font-weight="normal" >spread</text>
<text x="781.50" y="40.90" font-size="3.4" fill="#7ed321" stroke="#7ed321" stroke-width="0.05" text-anchor="end" font-weight="bold" >2.5</text>
<line x1="739.00" y1="42.60" x2="782.50" y2="42.60" stroke="#5a5a5a" stroke-width="0.5" />
<text x="753.00" y="46.00" font-size="3.2" fill="#5a5a5a" stroke="#5a5a5a" stroke-width="0.05" text-anchor="end" font-weight="normal" >ADS</text>
<text x="767.00" y="46.00" font-size="3.2" fill="#5a5a5a" stroke="#5a5a5a" stroke-width="0.05" text-anchor="end" font-weight="normal" >0.61025</text>
<text x="781.50" y="46.00" font-size="3.2" fill="#5a5a5a" stroke="#5a5a5a" stroke-width="0.05" text-anchor="end" font-weight="normal" >38</text>
<text x="753.00" y="49.70" font-size="3.2" fill="#5a5a5a" stroke="#5a5a5a" stroke-width="0.05" text-anchor="end" font-weight="normal" >LOD</text>
<text x="767.00" y="49.70" font-size="3.2" fill="#1d6b1d" stroke="#1d6b1d" stroke-width="0.05" text-anchor="end" font-weight="normal" >0.61004</text>
<text x="781.50" y="49.70" font-size="3.2" fill="#1f8f1f" stroke="#1f8f1f" stroke-width="0.05" text-anchor="end" font-weight="normal" >0</text>
<text x="767.00" y="54.00" font-size="3.2" fill="#5a5a5a" stroke="#5a5a5a" stroke-width="0.05" text-anchor="end" font-weight="normal" >TDR</text>
<text x="781.50" y="54.00" font-size="3.2" fill="#5a5a5a" stroke="#5a5a5a" stroke-width="0.05" text-anchor="end" font-weight="normal" >47</text>
<text x="767.00" y="58.40" font-size="3.2" fill="#5a5a5a" stroke="#5a5a5a" stroke-width="0.05" text-anchor="end" font-weight="normal" >YDR</text>
<text x="781.50" y="58.40" font-size="3.2" fill="#5a5a5a" stroke="#5a5a5a" stroke-width="0.05" text-anchor="end" font-weight="normal" >109</text>
<text x="767.00" y="62.20" font-size="3.2" fill="#5a5a5a" stroke="#5a5a5a" stroke-width="0.05" text-anchor="end" font-weight="normal" >WADR</text>
<text x="781.50" y="62.20" font-size="3.2" fill="#5a5a5a" stroke="#5a5a5a" stroke-width="0.05" text-anchor="end" font-weight="normal" >58</text>
<text x="767.00" y="65.80" font-size="3.2" fill="#5a5a5a" stroke="#5a5a5a" stroke-width="0.05" text-anchor="end" font-weight="normal" >MADR</text>
<text x="781.50" y="65.80" font-size="3.2" fill="#5a5a5a" stroke="#5a5a5a" stroke-width="0.05" text-anchor="end" font-weight="normal" >66</text>
<text x="767.00" y="69.40" font-size="3.2" fill="#5a5a5a" stroke="#5a5a5a" stroke-width="0.05" text-anchor="end" font-weight="normal" >RYADR</text>
<text x="781.50" y="69.40" font-size="3.2" fill="#5a5a5a" stroke="#5a5a5a" stroke-width="0.05" text-anchor="end" font-weight="normal" >73</text>
<line x1="739.00" y1="71.60" x2="782.50" y2="71.60" stroke="#5a5a5a" stroke-width="0.5" />
<text x="767.00" y="74.60" font-size="3.2" fill="#5a5a5a" stroke="#5a5a5a" stroke-width="0.05" text-anchor="end" font-weight="normal" >PTO</text>
<text x="781.50" y="74.60" font-size="3.2" fill="#5a5a5a" stroke="#5a5a5a" stroke-width="0.05" text-anchor="end" font-weight="normal" >.0</text>
<line x1="739.00" y1="76.30" x2="782.50" y2="76.30" stroke="#5a5a5a" stroke-width="0.5" />
<text x="753.00" y="79.40" font-size="3.2" fill="#5a5a5a" stroke="#5a5a5a" stroke-width="0.05" text-anchor="end" font-weight="normal" >SSL</text>
<text x="767.00" y="79.40" font-size="3.3" fill="#8ee000" stroke="#8ee000" stroke-width="0.05" text-anchor="end" font-weight="bold" >0.61025</text>
<text x="781.50" y="79.40" font-size="3.3" fill="#8ee000" stroke="#8ee000" stroke-width="0.05" text-anchor="end" font-weight="bold" >38</text>
<text x="753.00" y="82.80" font-size="3.2" fill="#5a5a5a" stroke="#5a5a5a" stroke-width="0.05" text-anchor="end" font-weight="normal" >WL</text>
<text x="767.00" y="82.80" font-size="3.2" fill="#1d6b1d" stroke="#1d6b1d" stroke-width="0.05" text-anchor="end" font-weight="normal" >0.61004</text>
<text x="781.50" y="82.80" font-size="3.2" fill="#1f8f1f" stroke="#1f8f1f" stroke-width="0.05" text-anchor="end" font-weight="normal" >0</text>
<text x="767.00" y="87.60" font-size="3.2" fill="#5a5a5a" stroke="#5a5a5a" stroke-width="0.05" text-anchor="end" font-weight="normal" >WR</text>
<text x="781.50" y="87.60" font-size="3.2" fill="#5a5a5a" stroke="#5a5a5a" stroke-width="0.05" text-anchor="end" font-weight="normal" >47</text>
<rect x="-10.00" y="433.20" width="820.00" height="7.40" fill="#ffffff" />
<rect x="-10.00" y="435.20" width="820.00" height="3.80" fill="#efefef" />
<text x="5.50" y="438.60" font-size="3.3" fill="#555" stroke="#555" stroke-width="0.05" text-anchor="start" font-weight="normal" textLength="27.5">US30USD-g,Daily</text>
<line x1="36.20" y1="435.20" x2="36.20" y2="439.40" stroke="#999" stroke-width="0.4" />
<text x="41.00" y="438.60" font-size="3.3" fill="#555" stroke="#555" stroke-width="0.05" text-anchor="start" font-weight="normal" textLength="25.0">US30USD-g,M5</text>
<line x1="69.20" y1="435.20" x2="69.20" y2="439.40" stroke="#999" stroke-width="0.4" />
<text x="73.50" y="438.60" font-size="3.3" fill="#555" stroke="#555" stroke-width="0.05" text-anchor="start" font-weight="normal" textLength="27.5">US30USD-g,M15</text>
<line x1="104.20" y1="435.20" x2="104.20" y2="439.40" stroke="#999" stroke-width="0.4" />
<text x="107.50" y="438.60" font-size="3.3" fill="#555" stroke="#555" stroke-width="0.05" text-anchor="start" font-weight="normal" textLength="26.0">US30USD-g,M1</text>
<line x1="136.70" y1="435.20" x2="136.70" y2="439.40" stroke="#999" stroke-width="0.4" />
<text x="141.00" y="438.60" font-size="3.3" fill="#555" stroke="#555" stroke-width="0.05" text-anchor="start" font-weight="normal" textLength="20.5">AUDCAD,H1</text>
<line x1="164.70" y1="435.20" x2="164.70" y2="439.40" stroke="#999" stroke-width="0.4" />
<text x="167.50" y="438.60" font-size="3.3" fill="#555" stroke="#555" stroke-width="0.05" text-anchor="start" font-weight="normal" textLength="26.0">US30USD-g,H4</text>
<line x1="196.70" y1="435.20" x2="196.70" y2="439.40" stroke="#999" stroke-width="0.4" />
<text x="199.00" y="438.60" font-size="3.3" fill="#555" stroke="#555" stroke-width="0.05" text-anchor="start" font-weight="normal" textLength="27.0">US30USD-g,M15</text>
<line x1="229.20" y1="435.20" x2="229.20" y2="439.40" stroke="#999" stroke-width="0.4" />
<rect x="228.6" y="434.3" width="27.2" height="5.6" fill="#fff" stroke="#777" stroke-width="0.4"/>
<text x="242.20" y="438.60" font-size="3.3" fill="#000" stroke="#000" stroke-width="0.05" text-anchor="middle" font-weight="bold" textLength="21">NZDUSD,H1</text>
<path d="M789.6 436.4 l-1 0.9 l1 0.9 M795 436.4 l1 0.9 l-1 0.9" stroke="#555" stroke-width="0.4" fill="none"/>
<rect x="-10.00" y="440.60" width="820.00" height="19.60" fill="#101013" />
<rect x="3.60" y="442.80" width="1.90" height="1.90" fill="#fff" />
<rect x="5.80" y="442.80" width="1.90" height="1.90" fill="#fff" />
<rect x="3.60" y="445.00" width="1.90" height="1.90" fill="#fff" />
<rect x="5.80" y="445.00" width="1.90" height="1.90" fill="#fff" />
<circle cx="16.6" cy="444.6" r="1.7" fill="none" stroke="#fff" stroke-width="0.6"/><path d="M15.4 446 L14 447.6" stroke="#fff" stroke-width="0.7"/>
<rect x="26" y="443.2" width="3.6" height="3.4" fill="none" stroke="#fff" stroke-width="0.5"/><path d="M30.4 443.6 V446.2" stroke="#fff" stroke-width="0.5"/>
<rect x="38.00" y="443.30" width="4.40" height="3.40" fill="#f7c846" />
<rect x="38.00" y="442.80" width="1.80" height="0.80" fill="#e0a92a" />
<rect x="38.00" y="445.50" width="4.40" height="1.20" fill="#3b8ad6" />
<circle cx="51.8" cy="444.9" r="2.2" fill="#e9d9b0"/><circle cx="51.0" cy="445.5" r="1.1" fill="#3a9bdc"/><rect x="52.199999999999996" y="442.5" width="1.4" height="2" fill="#f0a020"/>
<rect x="61.90" y="442.60" width="3.00" height="4.60" fill="#7fa3c8" />
<rect x="62.40" y="443.10" width="2.00" height="1.20" fill="#dfe9f5" />
<rect x="62.40" y="444.90" width="2.00" height="1.80" fill="#44607e" />
<rect x="72.60" y="443.00" width="4.00" height="3.80" fill="#e6e6e6" />
<rect x="73.40" y="444.30" width="1.40" height="1.20" fill="#333" />
<circle cx="86.5" cy="444.9" r="1.9" fill="none" stroke="#ff1b2d" stroke-width="1.1"/>
<circle cx="98.3" cy="444.9" r="2.3" fill="#ff9a1f"/><circle cx="98.6" cy="445.09999999999997" r="1.2" fill="#7a3fd0"/><path d="M96.1 444.09999999999997 q1 -1.8 2.6 -1.5" stroke="#ffd43a" stroke-width="0.7" fill="none"/>
<path d="M107.69999999999999 442.79999999999995 h3.8 l0.4 2 l-2.3 2.6 l-2.3 -2.6 z" fill="#fb542b"/><rect x="108.89999999999999" y="444.0" width="1.4" height="1.4" fill="#fff"/>
<circle cx="121.3" cy="444.9" r="2.3" fill="#1b9de2"/><path d="M119.2 445.5 a2.2 2.2 0 0 0 3.6 1.2" stroke="#4fd67a" stroke-width="1" fill="none"/><circle cx="121.6" cy="444.7" r="0.9" fill="#0c59a4"/>
<circle cx="132.8" cy="444.9" r="2.3" fill="#e33b2e"/><path d="M132.8 444.9 L130.8 443.75 A2.3 2.3 0 0 0 132.8 447.2 Z" fill="#2da94f"/><path d="M132.8 444.9 L132.8 447.2 A2.3 2.3 0 0 0 134.8 443.75 Z" fill="#fdd23e"/><circle cx="132.8" cy="444.9" r="1" fill="#4285f4" stroke="#fff" stroke-width="0.3"/>
<rect x="142.10" y="442.90" width="4.20" height="4.00" fill="#1d7044" />
<text x="143.10" y="446.10" font-size="3.2" fill="#fff" stroke="#fff" stroke-width="0.05" text-anchor="start" font-weight="bold" >X</text>
<rect x="145.00" y="443.30" width="1.30" height="3.20" fill="#e8f3ec" />
<rect x="153.70" y="442.90" width="4.20" height="4.00" fill="#2b5cb8" />
<text x="154.20" y="446.10" font-size="3.0" fill="#fff" stroke="#fff" stroke-width="0.05" text-anchor="start" font-weight="bold" >W</text>
<rect x="156.70" y="443.30" width="1.20" height="3.20" fill="#e6edf8" />
<path d="M165.2 442.9 L166.79999999999998 446.9 L169.39999999999998 443.29999999999995" stroke="#c91818" stroke-width="1.1" fill="none"/><circle cx="168.79999999999998" cy="446.09999999999997" r="0.6" fill="#f0c020"/>
<rect x="176.50" y="442.90" width="4.20" height="4.00" fill="#3a0a5e" stroke="#c07af0" stroke-width="0.4"/>
<text x="177.20" y="446.00" font-size="2.4" fill="#e0b0ff" stroke="#e0b0ff" stroke-width="0.05" text-anchor="start" font-weight="normal" >Pr</text>
<path d="M192.4 442.7 v4.4 l-1.6 0.2 l-2.6 -2.4 l2.6 -2.4 z" fill="#2a9df4"/><path d="M188.20000000000002 444.0 l1 -0.5 l3 2.6 v1 z" fill="#1570c8"/>
<circle cx="201.8" cy="444.9" r="2.3" fill="#4a4a3a"/><circle cx="201.8" cy="444.9" r="1.2" fill="#d8c27a"/>
<rect x="211.10" y="442.90" width="4.20" height="4.00" fill="#b8336a" />
<rect x="211.60" y="443.40" width="1.50" height="1.50" fill="#f5c84a" />
<rect x="213.40" y="443.40" width="1.50" height="1.50" fill="#58c0e8" />
<rect x="211.60" y="445.10" width="1.50" height="1.50" fill="#7ad86a" />
<rect x="213.40" y="445.10" width="1.50" height="1.50" fill="#f08a4a" />
<circle cx="225" cy="444.9" r="2.3" fill="#2a2f3a"/><circle cx="225" cy="444.9" r="1.2" fill="#c8ccd8"/>
<circle cx="236.6" cy="444.9" r="2.3" fill="#e8e8ee"/><circle cx="236.6" cy="444.9" r="1.5" fill="#e23a6a"/>
<path d="M248.2 442.5 L250.2 446.9 H246.2 Z" fill="#f08a1c"/><rect x="247.0" y="444.59999999999997" width="2.4" height="0.8" fill="#fff"/>
<path d="M257.8 443.09999999999997 L261.6 446.9" stroke="#e0e0e0" stroke-width="1"/><circle cx="258.2" cy="443.5" r="0.9" fill="#fff"/>
<circle cx="271.4" cy="444.9" r="2.3" fill="#5865f2"/><ellipse cx="271.4" cy="445.09999999999997" rx="1.4" ry="0.9" fill="#fff"/>
<circle cx="283" cy="444.9" r="2.3" fill="#2aa3e8"/><path d="M281.7 444.9 l2.6 -1.1 l-0.6 2.6 l-0.9 -0.9 z" fill="#fff"/>
<rect x="292.40" y="443.30" width="4.40" height="3.30" fill="#2b6fd0" />
<rect x="293.30" y="444.10" width="2.60" height="1.70" fill="#e8f0ff" />
<rect x="304.20" y="442.90" width="4.00" height="4.00" fill="#cfd3d8" rx="0.6"/>
<circle cx="306.2" cy="444.9" r="1.1" fill="#555"/>
<circle cx="317.8" cy="444.9" r="2.2" fill="#e6e6e6"/><circle cx="317.8" cy="444.9" r="0.9" fill="#444"/>
<circle cx="329.4" cy="444.9" r="2.4" fill="#4f8fe8"/><circle cx="328.9" cy="444.4" r="1.1" fill="#8fc0ff"/>
<rect x="350.50" y="443.10" width="4.20" height="3.60" fill="#e8e8e8" />
<path d="M350.8 446.29999999999995 l1.4 -2 l1 1.2 l0.8 -0.8 l0.8 1.6 z" fill="#3aa84a"/><circle cx="353.6" cy="444.0" r="0.5" fill="#f0b020"/>
<rect x="352.40" y="445.10" width="2.30" height="1.60" fill="#3a78d8" />
<rect x="335.60" y="440.60" width="11.00" height="9.60" fill="#35353a" />
<circle cx="341" cy="444.9" r="2.3" fill="#8cc63f"/><path d="M339.4 445.8 L341.8 443.4 M340.4 446.8 L342.8 444.4" stroke="#17171b" stroke-width="0.6"/>
<rect x="93.70" y="449.30" width="9.20" height="0.70" fill="#76b9ed" />
<rect x="336.40" y="449.30" width="9.20" height="0.70" fill="#76b9ed" />
<rect x="348.00" y="449.30" width="9.20" height="0.70" fill="#76b9ed" />
<path d="M743 445.6 L744.6 444 L746.2 445.6" stroke="#fff" stroke-width="0.5" fill="none"/>
<path d="M750.6 444.2 h1 l1.2 -1 v3.6 l-1.2 -1 h-1 z" fill="#fff"/><path d="M753.8 443.6 q1 1.3 0 2.6" stroke="#fff" stroke-width="0.4" fill="none"/>
<circle cx="760" cy="445" r="2.1" fill="#3a8ae8"/>
<rect x="766.2" y="443.4" width="3.6" height="2.6" fill="none" stroke="#fff" stroke-width="0.5"/><path d="M767 447 h2" stroke="#fff" stroke-width="0.5"/>
<text x="777.40" y="446.30" font-size="3.3" fill="#fff" stroke="#fff" stroke-width="0.05" text-anchor="middle" font-weight="normal" >17:16</text>
<path d="M787.6 443 h4.6 v3.2 h-2.8 l-1 1 v-1 h-0.8 z" fill="#fff"/>
<rect x="440.60" y="220.40" width="92.00" height="72.00" fill="#000" opacity="0.18"/>
<rect x="441.00" y="220.70" width="92.00" height="71.40" fill="#ffffff" stroke="#8a8a8a" stroke-width="0.4"/>
<rect x="441.20" y="229.60" width="91.00" height="62.30" fill="#f0f0f0" />
<rect x="444.00" y="223.00" width="3.60" height="3.20" fill="#5b9bd5" />
<rect x="445.40" y="224.40" width="3.60" height="3.20" fill="#f2c744" />
<text transform="translate(450.00 227.00) scale(0.925 1)" font-size="3.95" fill="#9a9a9a" stroke="#9a9a9a" stroke-width="0.13" text-anchor="start" font-weight="normal" >Indicators on NZDUSD,H1</text>
<rect x="444.50" y="233.00" width="85.00" height="55.70" fill="#ffffff" stroke="#828790" stroke-width="0.4"/>
<rect x="523.80" y="233.20" width="5.50" height="50.80" fill="#f0f0f0" />
<rect x="524.20" y="238.60" width="4.70" height="12.00" fill="#cdcdcd" />
<path d="M525.2 236.8 l1.4 -1.6 l1.4 1.6 z M525.2 280.2 l1.4 1.6 l1.4 -1.6 z" fill="#333"/>
<rect x="444.70" y="284.00" width="79.00" height="4.60" fill="#f0f0f0" />
<rect x="450.00" y="284.50" width="63.50" height="3.60" fill="#cdcdcd" />
<path d="M448 285 l-1.5 1.3 l1.5 1.3 z M520 285 l1.5 1.3 l-1.5 1.3 z" fill="#333"/>
<rect x="523.80" y="284.00" width="5.50" height="4.60" fill="#f0f0f0" />
<rect x="447" y="235.3" width="2.4" height="2.4" fill="#fff" stroke="#999" stroke-width="0.3"/><path d="M447.6 236.5 h1.2" stroke="#444" stroke-width="0.3"/>
<rect x="452.40" y="234.40" width="5.20" height="4.20" fill="#4a7fd0" />
<rect x="453.00" y="236.00" width="4.00" height="2.00" fill="#e8f0ff" />
<text transform="translate(459.00 237.70) scale(0.882 1)" font-size="3.8" fill="#000" stroke="#000" stroke-width="0.13" text-anchor="start" font-weight="normal" >Main chart</text>
<line x1="448.20" y1="238.00" x2="448.20" y2="283.80" stroke="#b0b0b0" stroke-width="0.3" stroke-dasharray="0.4 0.4"/>
<line x1="454.50" y1="238.80" x2="454.50" y2="283.80" stroke="#b0b0b0" stroke-width="0.3" stroke-dasharray="0.4 0.4"/>
<line x1="454.50" y1="242.00" x2="458.60" y2="242.00" stroke="#b0b0b0" stroke-width="0.3" stroke-dasharray="0.4 0.4"/>
<rect x="459.00" y="240.00" width="4.60" height="4.00" fill="#f4c430" />
<rect x="459.70" y="240.70" width="3.20" height="1.00" fill="#fff3b0" />
<rect x="460.20" y="242.20" width="2.80" height="1.20" fill="#c98a10" />
<text transform="translate(465.20 243.20) scale(0.882 1)" font-size="3.8" fill="#000" stroke="#000" stroke-width="0.13" text-anchor="start" font-weight="normal" >Toggle borders</text>
<line x1="454.50" y1="247.66" x2="458.60" y2="247.66" stroke="#b0b0b0" stroke-width="0.3" stroke-dasharray="0.4 0.4"/>
<rect x="459.00" y="245.66" width="4.60" height="4.00" fill="#f4c430" />
<rect x="459.70" y="246.36" width="3.20" height="1.00" fill="#fff3b0" />
<rect x="460.20" y="247.86" width="2.80" height="1.20" fill="#c98a10" />
<text transform="translate(465.20 248.86) scale(0.882 1)" font-size="3.8" fill="#000" stroke="#000" stroke-width="0.13" text-anchor="start" font-weight="normal" >!SM_NeonHUD</text>
<line x1="454.50" y1="253.32" x2="458.60" y2="253.32" stroke="#b0b0b0" stroke-width="0.3" stroke-dasharray="0.4 0.4"/>
<rect x="459.00" y="251.32" width="4.60" height="4.00" fill="#f4c430" />
<rect x="459.70" y="252.02" width="3.20" height="1.00" fill="#fff3b0" />
<rect x="460.20" y="253.52" width="2.80" height="1.20" fill="#c98a10" />
<text transform="translate(465.20 254.52) scale(0.882 1)" font-size="3.8" fill="#000" stroke="#000" stroke-width="0.13" text-anchor="start" font-weight="normal" >2xMA averages (candles + arrows) BT</text>
<line x1="454.50" y1="258.98" x2="458.60" y2="258.98" stroke="#b0b0b0" stroke-width="0.3" stroke-dasharray="0.4 0.4"/>
<rect x="459.00" y="256.98" width="4.60" height="4.00" fill="#f4c430" />
<rect x="459.70" y="257.68" width="3.20" height="1.00" fill="#fff3b0" />
<rect x="460.20" y="259.18" width="2.80" height="1.20" fill="#c98a10" />
<text transform="translate(465.20 260.18) scale(0.882 1)" font-size="3.8" fill="#000" stroke="#000" stroke-width="0.13" text-anchor="start" font-weight="normal" >Change TimeFrame TT [AutoRefresh]</text>
<line x1="454.50" y1="264.64" x2="458.60" y2="264.64" stroke="#b0b0b0" stroke-width="0.3" stroke-dasharray="0.4 0.4"/>
<rect x="459.00" y="262.64" width="4.60" height="4.00" fill="#f4c430" />
<rect x="459.70" y="263.34" width="3.20" height="1.00" fill="#fff3b0" />
<rect x="460.20" y="264.84" width="2.80" height="1.20" fill="#c98a10" />
<text transform="translate(465.20 265.84) scale(0.882 1)" font-size="3.8" fill="#000" stroke="#000" stroke-width="0.13" text-anchor="start" font-weight="normal" >PixedChartScale</text>
<line x1="454.50" y1="270.30" x2="458.60" y2="270.30" stroke="#b0b0b0" stroke-width="0.3" stroke-dasharray="0.4 0.4"/>
<rect x="459.00" y="268.30" width="4.60" height="4.00" fill="#f4c430" />
<rect x="459.70" y="269.00" width="3.20" height="1.00" fill="#fff3b0" />
<rect x="460.20" y="270.50" width="2.80" height="1.20" fill="#c98a10" />
<text transform="translate(465.20 271.50) scale(0.882 1)" font-size="3.8" fill="#000" stroke="#000" stroke-width="0.13" text-anchor="start" font-weight="normal" >KillZones</text>
<line x1="454.50" y1="275.96" x2="458.60" y2="275.96" stroke="#b0b0b0" stroke-width="0.3" stroke-dasharray="0.4 0.4"/>
<rect x="459.00" y="273.96" width="4.60" height="4.00" fill="#f4c430" />
<rect x="459.70" y="274.66" width="3.20" height="1.00" fill="#fff3b0" />
<rect x="460.20" y="276.16" width="2.80" height="1.20" fill="#c98a10" />
<text transform="translate(465.20 277.16) scale(0.882 1)" font-size="3.8" fill="#000" stroke="#000" stroke-width="0.13" text-anchor="start" font-weight="normal" >My Color Notes V3 BT</text>
<line x1="454.50" y1="281.62" x2="458.60" y2="281.62" stroke="#b0b0b0" stroke-width="0.3" stroke-dasharray="0.4 0.4"/>
<rect x="459.00" y="279.62" width="4.60" height="4.00" fill="#f4c430" />
<rect x="459.70" y="280.32" width="3.20" height="1.00" fill="#fff3b0" />
<rect x="460.20" y="281.82" width="2.80" height="1.20" fill="#c98a10" />
<text transform="translate(465.20 282.82) scale(0.882 1)" font-size="3.8" fill="#000" stroke="#000" stroke-width="0.13" text-anchor="start" font-weight="normal" >My Color Notes V3 BT</text>
<rect x="450.7" y="250.9" width="79.2" height="5.5" fill="none" stroke="#14a63c" stroke-width="2.2"/>
<rect x="529.90" y="90.50" width="263.90" height="254.60" fill="#000" opacity="0.25"/>
<rect x="530.50" y="91.00" width="262.60" height="253.30" fill="#f0f0f0" />
<rect x="530.50" y="91.00" width="262.60" height="9.00" fill="#ffffff" />
<rect x="531.2" y="91.2" width="261.2" height="252.4" fill="none" stroke="#ffffff" stroke-width="1.3"/>
<rect x="530.5" y="90.7" width="262.6" height="253.6" fill="none" stroke="#6e6e6e" stroke-width="0.3"/>
<text transform="translate(533.40 97.00) scale(0.925 1)" font-size="3.95" fill="#000" stroke="#000" stroke-width="0.13" text-anchor="start" font-weight="normal" >Custom Indicator - 2xMA averages (candles + arrows) BT 1.2</text>
<text transform="translate(772.00 97.40) scale(1 1)" font-size="4.4" fill="#000" stroke="#000" stroke-width="0.13" text-anchor="middle" font-weight="normal" >?</text>
<path d="M783.9 93.9 L787 97 M787 93.9 L783.9 97" stroke="#000" stroke-width="0.6"/>
<rect x="533.80" y="103.40" width="11.20" height="5.40" fill="#f0f0f0" stroke="#d9d9d9" stroke-width="0.3"/>
<text transform="translate(539.40 107.30) scale(0.882 1)" font-size="3.8" fill="#000" stroke="#000" stroke-width="0.13" text-anchor="middle" font-weight="normal" >About</text>
<rect x="545.00" y="103.40" width="18.00" height="5.40" fill="#f0f0f0" stroke="#d9d9d9" stroke-width="0.3"/>
<text transform="translate(554.00 107.30) scale(0.882 1)" font-size="3.8" fill="#000" stroke="#000" stroke-width="0.13" text-anchor="middle" font-weight="normal" >Common</text>
<rect x="562.60" y="102.60" width="13.80" height="6.60" fill="#ffffff" stroke="#d0d0d0" stroke-width="0.3"/>
<text transform="translate(569.50 107.00) scale(0.882 1)" font-size="3.8" fill="#000" stroke="#000" stroke-width="0.13" text-anchor="middle" font-weight="normal" >Inputs</text>
<rect x="576.00" y="103.40" width="12.60" height="5.40" fill="#f0f0f0" stroke="#d9d9d9" stroke-width="0.3"/>
<text transform="translate(582.30 107.30) scale(0.882 1)" font-size="3.8" fill="#000" stroke="#000" stroke-width="0.13" text-anchor="middle" font-weight="normal" >Colors</text>
<rect x="588.60" y="103.40" width="21.40" height="5.40" fill="#f0f0f0" stroke="#d9d9d9" stroke-width="0.3"/>
<text transform="translate(599.30 107.30) scale(0.882 1)" font-size="3.8" fill="#000" stroke="#000" stroke-width="0.13" text-anchor="middle" font-weight="normal" >Visualization</text>
<rect x="534.60" y="108.80" width="255.80" height="224.40" fill="#ffffff" stroke="#d9d9d9" stroke-width="0.3"/>
<rect x="563.00" y="108.40" width="13.00" height="0.90" fill="#ffffff" />
<rect x="536.60" y="112.40" width="215.60" height="217.60" fill="#ffffff" stroke="#828790" stroke-width="0.35"/>
<rect x="536.80" y="112.60" width="210.40" height="7.00" fill="#ffffff" />
<line x1="536.60" y1="119.60" x2="747.00" y2="119.60" stroke="#e0e0e0" stroke-width="0.3" />
<line x1="641.60" y1="112.60" x2="641.60" y2="119.40" stroke="#e0e0e0" stroke-width="0.3" />
<text transform="translate(539.60 117.60) scale(0.882 1)" font-size="3.8" fill="#000" stroke="#000" stroke-width="0.13" text-anchor="start" font-weight="normal" >Variable</text>
<text transform="translate(644.40 117.60) scale(0.882 1)" font-size="3.8" fill="#000" stroke="#000" stroke-width="0.13" text-anchor="start" font-weight="normal" >Value</text>
<clipPath id="lc"><rect x="536.6" y="112.4" width="215.6" height="217.5"/></clipPath><g clip-path="url(#lc)">
<line x1="641.60" y1="119.87" x2="641.60" y2="126.13" stroke="#dcdcdc" stroke-width="0.3" />
<rect x="537.40" y="120.90" width="4.40" height="4.10" fill="#62a4ea" rx="0.6"/>
<rect x="538.10" y="122.50" width="3.00" height="1.10" fill="#e4f0ff" />
<text transform="translate(543.40 124.20) scale(0.882 1)" font-size="3.8" fill="#000" stroke="#000" stroke-width="0.13" text-anchor="start" font-weight="normal" >Time frame</text>
<text transform="translate(643.00 124.20) scale(0.882 1)" font-size="3.8" fill="#000" stroke="#000" stroke-width="0.13" text-anchor="start" font-weight="normal" >Current time frame</text>
<rect x="536.80" y="126.13" width="210.20" height="6.26" fill="#ebebeb" />
<line x1="641.60" y1="126.13" x2="641.60" y2="132.39" stroke="#dcdcdc" stroke-width="0.3" />
<rect x="537.40" y="127.16" width="4.40" height="4.10" fill="#62a4ea" rx="0.6"/>
<rect x="538.10" y="128.76" width="3.00" height="1.10" fill="#e4f0ff" />
<text transform="translate(543.40 130.46) scale(0.882 1)" font-size="3.8" fill="#000" stroke="#000" stroke-width="0.13" text-anchor="start" font-weight="normal" >Fast ma period</text>
<text transform="translate(643.00 130.46) scale(0.882 1)" font-size="3.8" fill="#000" stroke="#000" stroke-width="0.13" text-anchor="start" font-weight="normal" >5</text>
<line x1="641.60" y1="132.39" x2="641.60" y2="138.65" stroke="#dcdcdc" stroke-width="0.3" />
<rect x="537.40" y="133.42" width="4.40" height="4.10" fill="#62a4ea" rx="0.6"/>
<rect x="538.10" y="135.02" width="3.00" height="1.10" fill="#e4f0ff" />
<text transform="translate(543.40 136.72) scale(0.882 1)" font-size="3.8" fill="#000" stroke="#000" stroke-width="0.13" text-anchor="start" font-weight="normal" >Ma Fast type</text>
<text transform="translate(643.00 136.72) scale(0.882 1)" font-size="3.8" fill="#000" stroke="#000" stroke-width="0.13" text-anchor="start" font-weight="normal" >Exponential moving average - EMA</text>
<rect x="536.80" y="138.66" width="210.20" height="6.26" fill="#ebebeb" />
<line x1="641.60" y1="138.66" x2="641.60" y2="144.92" stroke="#dcdcdc" stroke-width="0.3" />
<rect x="537.40" y="139.69" width="4.40" height="4.10" fill="#62a4ea" rx="0.6"/>
<rect x="538.10" y="141.29" width="3.00" height="1.10" fill="#e4f0ff" />
<text transform="translate(543.40 142.99) scale(0.882 1)" font-size="3.8" fill="#000" stroke="#000" stroke-width="0.13" text-anchor="start" font-weight="normal" >Ma Fast price to use</text>
<text transform="translate(643.00 142.99) scale(0.882 1)" font-size="3.8" fill="#000" stroke="#000" stroke-width="0.13" text-anchor="start" font-weight="normal" >Close</text>
<line x1="641.60" y1="144.92" x2="641.60" y2="151.18" stroke="#dcdcdc" stroke-width="0.3" />
<rect x="537.40" y="145.95" width="4.40" height="4.10" fill="#62a4ea" rx="0.6"/>
<rect x="538.10" y="147.55" width="3.00" height="1.10" fill="#e4f0ff" />
<text transform="translate(543.40 149.25) scale(0.882 1)" font-size="3.8" fill="#000" stroke="#000" stroke-width="0.13" text-anchor="start" font-weight="normal" >Shadow fast line width</text>
<text transform="translate(643.00 149.25) scale(0.882 1)" font-size="3.8" fill="#000" stroke="#000" stroke-width="0.13" text-anchor="start" font-weight="normal" >5</text>
<rect x="536.80" y="151.18" width="210.20" height="6.26" fill="#ebebeb" />
<line x1="641.60" y1="151.18" x2="641.60" y2="157.44" stroke="#dcdcdc" stroke-width="0.3" />
<rect x="537.40" y="152.21" width="4.40" height="4.10" fill="#62a4ea" rx="0.6"/>
<rect x="538.10" y="153.81" width="3.00" height="1.10" fill="#e4f0ff" />
<text transform="translate(543.40 155.51) scale(0.882 1)" font-size="3.8" fill="#000" stroke="#000" stroke-width="0.13" text-anchor="start" font-weight="normal" >fast lines   width</text>
<text transform="translate(643.00 155.51) scale(0.882 1)" font-size="3.8" fill="#000" stroke="#000" stroke-width="0.13" text-anchor="start" font-weight="normal" >3</text>
<line x1="641.60" y1="157.44" x2="641.60" y2="163.70" stroke="#dcdcdc" stroke-width="0.3" />
<rect x="537.40" y="158.47" width="4.40" height="4.10" fill="#e8eef8" rx="0.6"/>
<rect x="537.60" y="160.37" width="4.00" height="2.00" fill="#f8a61c" />
<rect x="540.60" y="158.67" width="1.00" height="1.20" fill="#e04a2a" />
<text transform="translate(543.40 161.77) scale(0.882 1)" font-size="3.8" fill="#000" stroke="#000" stroke-width="0.13" text-anchor="start" font-weight="normal" >Bullish fast line  color</text>
<rect x="643.20" y="158.67" width="3.60" height="3.70" fill="#4682b4" />
<text transform="translate(648.00 161.77) scale(0.882 1)" font-size="3.8" fill="#000" stroke="#000" stroke-width="0.13" text-anchor="start" font-weight="normal" >SteelBlue</text>
<rect x="536.80" y="163.70" width="210.20" height="6.26" fill="#ebebeb" />
<line x1="641.60" y1="163.70" x2="641.60" y2="169.96" stroke="#dcdcdc" stroke-width="0.3" />
<rect x="537.40" y="164.73" width="4.40" height="4.10" fill="#e8eef8" rx="0.6"/>
<rect x="537.60" y="166.63" width="4.00" height="2.00" fill="#f8a61c" />
<rect x="540.60" y="164.93" width="1.00" height="1.20" fill="#e04a2a" />
<text transform="translate(543.40 168.03) scale(0.882 1)" font-size="3.8" fill="#000" stroke="#000" stroke-width="0.13" text-anchor="start" font-weight="normal" >Bearish fast line  color</text>
<rect x="643.20" y="164.93" width="3.60" height="3.70" fill="#d2691e" />
<text transform="translate(648.00 168.03) scale(0.882 1)" font-size="3.8" fill="#000" stroke="#000" stroke-width="0.13" text-anchor="start" font-weight="normal" >Chocolate</text>
<line x1="641.60" y1="169.97" x2="641.60" y2="176.23" stroke="#dcdcdc" stroke-width="0.3" />
<rect x="537.40" y="171.00" width="4.40" height="4.10" fill="#e8eef8" rx="0.6"/>
<rect x="537.60" y="172.90" width="4.00" height="2.00" fill="#f8a61c" />
<rect x="540.60" y="171.20" width="1.00" height="1.20" fill="#e04a2a" />
<text transform="translate(543.40 174.30) scale(0.882 1)" font-size="3.8" fill="#000" stroke="#000" stroke-width="0.13" text-anchor="start" font-weight="normal" >Shadow fast color</text>
<rect x="643.20" y="171.20" width="3.60" height="3.70" fill="#243e3e" />
<text transform="translate(648.00 174.30) scale(0.882 1)" font-size="3.8" fill="#000" stroke="#000" stroke-width="0.13" text-anchor="start" font-weight="normal" >36,62,62</text>
<rect x="536.80" y="176.23" width="210.20" height="6.26" fill="#ebebeb" />
<line x1="641.60" y1="176.23" x2="641.60" y2="182.49" stroke="#dcdcdc" stroke-width="0.3" />
<rect x="537.40" y="177.26" width="4.40" height="4.10" fill="#62a4ea" rx="0.6"/>
<rect x="538.10" y="178.86" width="3.00" height="1.10" fill="#e4f0ff" />
<text transform="translate(543.40 180.56) scale(0.882 1)" font-size="3.8" fill="#000" stroke="#000" stroke-width="0.13" text-anchor="start" font-weight="normal" >Slow ma period</text>
<text transform="translate(643.00 180.56) scale(0.882 1)" font-size="3.8" fill="#000" stroke="#000" stroke-width="0.13" text-anchor="start" font-weight="normal" >13</text>
<line x1="641.60" y1="182.49" x2="641.60" y2="188.75" stroke="#dcdcdc" stroke-width="0.3" />
<rect x="537.40" y="183.52" width="4.40" height="4.10" fill="#62a4ea" rx="0.6"/>
<rect x="538.10" y="185.12" width="3.00" height="1.10" fill="#e4f0ff" />
<text transform="translate(543.40 186.82) scale(0.882 1)" font-size="3.8" fill="#000" stroke="#000" stroke-width="0.13" text-anchor="start" font-weight="normal" >Slow Ma type</text>
<text transform="translate(643.00 186.82) scale(0.882 1)" font-size="3.8" fill="#000" stroke="#000" stroke-width="0.13" text-anchor="start" font-weight="normal" >Exponential moving average - EMA</text>
<rect x="536.80" y="188.75" width="210.20" height="6.26" fill="#ebebeb" />
<line x1="641.60" y1="188.75" x2="641.60" y2="195.01" stroke="#dcdcdc" stroke-width="0.3" />
<rect x="537.40" y="189.78" width="4.40" height="4.10" fill="#62a4ea" rx="0.6"/>
<rect x="538.10" y="191.38" width="3.00" height="1.10" fill="#e4f0ff" />
<text transform="translate(543.40 193.08) scale(0.882 1)" font-size="3.8" fill="#000" stroke="#000" stroke-width="0.13" text-anchor="start" font-weight="normal" >Slow Ma price to use</text>
<text transform="translate(643.00 193.08) scale(0.882 1)" font-size="3.8" fill="#000" stroke="#000" stroke-width="0.13" text-anchor="start" font-weight="normal" >Close</text>
<line x1="641.60" y1="195.01" x2="641.60" y2="201.27" stroke="#dcdcdc" stroke-width="0.3" />
<rect x="537.40" y="196.04" width="4.40" height="4.10" fill="#62a4ea" rx="0.6"/>
<rect x="538.10" y="197.64" width="3.00" height="1.10" fill="#e4f0ff" />
<text transform="translate(543.40 199.34) scale(0.882 1)" font-size="3.8" fill="#000" stroke="#000" stroke-width="0.13" text-anchor="start" font-weight="normal" >Shadow Slow line width</text>
<text transform="translate(643.00 199.34) scale(0.882 1)" font-size="3.8" fill="#000" stroke="#000" stroke-width="0.13" text-anchor="start" font-weight="normal" >5</text>
<rect x="536.80" y="201.28" width="210.20" height="6.26" fill="#ebebeb" />
<line x1="641.60" y1="201.28" x2="641.60" y2="207.54" stroke="#dcdcdc" stroke-width="0.3" />
<rect x="537.40" y="202.31" width="4.40" height="4.10" fill="#62a4ea" rx="0.6"/>
<rect x="538.10" y="203.91" width="3.00" height="1.10" fill="#e4f0ff" />
<text transform="translate(543.40 205.61) scale(0.882 1)" font-size="3.8" fill="#000" stroke="#000" stroke-width="0.13" text-anchor="start" font-weight="normal" >Slow Lines width</text>
<text transform="translate(643.00 205.61) scale(0.882 1)" font-size="3.8" fill="#000" stroke="#000" stroke-width="0.13" text-anchor="start" font-weight="normal" >3</text>
<line x1="641.60" y1="207.54" x2="641.60" y2="213.80" stroke="#dcdcdc" stroke-width="0.3" />
<rect x="537.40" y="208.57" width="4.40" height="4.10" fill="#e8eef8" rx="0.6"/>
<rect x="537.60" y="210.47" width="4.00" height="2.00" fill="#f8a61c" />
<rect x="540.60" y="208.77" width="1.00" height="1.20" fill="#e04a2a" />
<text transform="translate(543.40 211.87) scale(0.882 1)" font-size="3.8" fill="#000" stroke="#000" stroke-width="0.13" text-anchor="start" font-weight="normal" >Bullish Slow line  color</text>
<rect x="643.20" y="208.77" width="3.60" height="3.70" fill="#4682b4" />
<text transform="translate(648.00 211.87) scale(0.882 1)" font-size="3.8" fill="#000" stroke="#000" stroke-width="0.13" text-anchor="start" font-weight="normal" >SteelBlue</text>
<rect x="536.80" y="213.80" width="210.20" height="6.26" fill="#ebebeb" />
<line x1="641.60" y1="213.80" x2="641.60" y2="220.06" stroke="#dcdcdc" stroke-width="0.3" />
<rect x="537.40" y="214.83" width="4.40" height="4.10" fill="#e8eef8" rx="0.6"/>
<rect x="537.60" y="216.73" width="4.00" height="2.00" fill="#f8a61c" />
<rect x="540.60" y="215.03" width="1.00" height="1.20" fill="#e04a2a" />
<text transform="translate(543.40 218.13) scale(0.882 1)" font-size="3.8" fill="#000" stroke="#000" stroke-width="0.13" text-anchor="start" font-weight="normal" >Bearish Slow line  color</text>
<rect x="643.20" y="215.03" width="3.60" height="3.70" fill="#d2691e" />
<text transform="translate(648.00 218.13) scale(0.882 1)" font-size="3.8" fill="#000" stroke="#000" stroke-width="0.13" text-anchor="start" font-weight="normal" >Chocolate</text>
<line x1="641.60" y1="220.06" x2="641.60" y2="226.32" stroke="#dcdcdc" stroke-width="0.3" />
<rect x="537.40" y="221.09" width="4.40" height="4.10" fill="#e8eef8" rx="0.6"/>
<rect x="537.60" y="222.99" width="4.00" height="2.00" fill="#f8a61c" />
<rect x="540.60" y="221.29" width="1.00" height="1.20" fill="#e04a2a" />
<text transform="translate(543.40 224.39) scale(0.882 1)" font-size="3.8" fill="#000" stroke="#000" stroke-width="0.13" text-anchor="start" font-weight="normal" >Shadow Slow line color</text>
<rect x="643.20" y="221.29" width="3.60" height="3.70" fill="#243e3e" />
<text transform="translate(648.00 224.39) scale(0.882 1)" font-size="3.8" fill="#000" stroke="#000" stroke-width="0.13" text-anchor="start" font-weight="normal" >36,62,62</text>
<rect x="536.80" y="226.32" width="210.20" height="6.26" fill="#f7eef3" />
<line x1="641.60" y1="226.32" x2="641.60" y2="232.58" stroke="#dcdcdc" stroke-width="0.3" />
<rect x="537.40" y="227.35" width="4.40" height="4.10" fill="#7fe08e" rx="0.6"/>
<path d="M538.1 230.45 l1.2 -1.8 l0.9 1.1 l1.3 -1.9" stroke="#2fa84a" stroke-width="0.6" fill="none"/>
<text transform="translate(543.40 230.65) scale(0.882 1)" font-size="3.8" fill="#000" stroke="#000" stroke-width="0.13" text-anchor="start" font-weight="normal" >Candles are visible?</text>
<text transform="translate(643.00 230.65) scale(0.882 1)" font-size="3.8" fill="#000" stroke="#000" stroke-width="0.13" text-anchor="start" font-weight="normal" >true</text>
<line x1="641.60" y1="232.59" x2="641.60" y2="238.85" stroke="#dcdcdc" stroke-width="0.3" />
<rect x="537.40" y="233.62" width="4.40" height="4.10" fill="#7fe08e" rx="0.6"/>
<path d="M538.1 236.72 l1.2 -1.8 l0.9 1.1 l1.3 -1.9" stroke="#2fa84a" stroke-width="0.6" fill="none"/>
<text transform="translate(543.40 236.92) scale(0.882 1)" font-size="3.8" fill="#000" stroke="#000" stroke-width="0.13" text-anchor="start" font-weight="normal" >Lines are visible?</text>
<text transform="translate(643.00 236.92) scale(0.882 1)" font-size="3.8" fill="#000" stroke="#000" stroke-width="0.13" text-anchor="start" font-weight="normal" >true</text>
<rect x="536.80" y="238.85" width="210.20" height="6.26" fill="#ebebeb" />
<line x1="641.60" y1="238.85" x2="641.60" y2="245.11" stroke="#dcdcdc" stroke-width="0.3" />
<rect x="537.40" y="239.88" width="4.40" height="4.10" fill="#7fe08e" rx="0.6"/>
<path d="M538.1 242.98 l1.2 -1.8 l0.9 1.1 l1.3 -1.9" stroke="#2fa84a" stroke-width="0.6" fill="none"/>
<text transform="translate(543.40 243.18) scale(0.882 1)" font-size="3.8" fill="#000" stroke="#000" stroke-width="0.13" text-anchor="start" font-weight="normal" >Arrows are visible?</text>
<text transform="translate(643.00 243.18) scale(0.882 1)" font-size="3.8" fill="#000" stroke="#000" stroke-width="0.13" text-anchor="start" font-weight="normal" >false</text>
<line x1="641.60" y1="245.11" x2="641.60" y2="251.37" stroke="#dcdcdc" stroke-width="0.3" />
<rect x="537.40" y="246.14" width="4.40" height="4.10" fill="#62a4ea" rx="0.6"/>
<rect x="538.10" y="247.74" width="3.00" height="1.10" fill="#e4f0ff" />
<text transform="translate(543.40 249.44) scale(0.882 1)" font-size="3.8" fill="#000" stroke="#000" stroke-width="0.13" text-anchor="start" font-weight="normal" >Candle wick width</text>
<text transform="translate(643.00 249.44) scale(0.882 1)" font-size="3.8" fill="#000" stroke="#000" stroke-width="0.13" text-anchor="start" font-weight="normal" >1</text>
<rect x="536.80" y="251.37" width="210.20" height="6.26" fill="#ebebeb" />
<line x1="641.60" y1="251.37" x2="641.60" y2="257.63" stroke="#dcdcdc" stroke-width="0.3" />
<rect x="537.40" y="252.40" width="4.40" height="4.10" fill="#62a4ea" rx="0.6"/>
<rect x="538.10" y="254.00" width="3.00" height="1.10" fill="#e4f0ff" />
<text transform="translate(543.40 255.70) scale(0.882 1)" font-size="3.8" fill="#000" stroke="#000" stroke-width="0.13" text-anchor="start" font-weight="normal" >If auto width = false then use this</text>
<text transform="translate(643.00 255.70) scale(0.882 1)" font-size="3.8" fill="#000" stroke="#000" stroke-width="0.13" text-anchor="start" font-weight="normal" >2</text>
<line x1="641.60" y1="257.63" x2="641.60" y2="263.89" stroke="#dcdcdc" stroke-width="0.3" />
<rect x="537.40" y="258.66" width="4.40" height="4.10" fill="#7fe08e" rx="0.6"/>
<path d="M538.1 261.76 l1.2 -1.8 l0.9 1.1 l1.3 -1.9" stroke="#2fa84a" stroke-width="0.6" fill="none"/>
<text transform="translate(543.40 261.96) scale(0.882 1)" font-size="3.8" fill="#000" stroke="#000" stroke-width="0.13" text-anchor="start" font-weight="normal" >Auto adjust candle body width</text>
<text transform="translate(643.00 261.96) scale(0.882 1)" font-size="3.8" fill="#000" stroke="#000" stroke-width="0.13" text-anchor="start" font-weight="normal" >true</text>
<rect x="536.80" y="263.90" width="210.20" height="6.26" fill="#ebebeb" />
<line x1="641.60" y1="263.90" x2="641.60" y2="270.16" stroke="#dcdcdc" stroke-width="0.3" />
<rect x="537.40" y="264.93" width="4.40" height="4.10" fill="#e8eef8" rx="0.6"/>
<rect x="537.60" y="266.83" width="4.00" height="2.00" fill="#f8a61c" />
<rect x="540.60" y="265.13" width="1.00" height="1.20" fill="#e04a2a" />
<text transform="translate(543.40 268.23) scale(0.882 1)" font-size="3.8" fill="#000" stroke="#000" stroke-width="0.13" text-anchor="start" font-weight="normal" >Bullish candles  color</text>
<rect x="643.20" y="265.13" width="3.60" height="3.70" fill="#3cb371" />
<text transform="translate(648.00 268.23) scale(0.882 1)" font-size="3.8" fill="#000" stroke="#000" stroke-width="0.13" text-anchor="start" font-weight="normal" >MediumSeaGreen</text>
<line x1="641.60" y1="270.16" x2="641.60" y2="276.42" stroke="#dcdcdc" stroke-width="0.3" />
<rect x="537.40" y="271.19" width="4.40" height="4.10" fill="#e8eef8" rx="0.6"/>
<rect x="537.60" y="273.09" width="4.00" height="2.00" fill="#f8a61c" />
<rect x="540.60" y="271.39" width="1.00" height="1.20" fill="#e04a2a" />
<text transform="translate(543.40 274.49) scale(0.882 1)" font-size="3.8" fill="#000" stroke="#000" stroke-width="0.13" text-anchor="start" font-weight="normal" >Bearish candles  color</text>
<rect x="643.20" y="271.39" width="3.60" height="3.70" fill="#dc143c" />
<text transform="translate(648.00 274.49) scale(0.882 1)" font-size="3.8" fill="#000" stroke="#000" stroke-width="0.13" text-anchor="start" font-weight="normal" >Crimson</text>
<rect x="536.80" y="276.42" width="210.20" height="6.26" fill="#ebebeb" />
<line x1="641.60" y1="276.42" x2="641.60" y2="282.68" stroke="#dcdcdc" stroke-width="0.3" />
<rect x="537.40" y="277.45" width="4.40" height="4.10" fill="#7fe08e" rx="0.6"/>
<path d="M538.1 280.55 l1.2 -1.8 l0.9 1.1 l1.3 -1.9" stroke="#2fa84a" stroke-width="0.6" fill="none"/>
<text transform="translate(543.40 280.75) scale(0.882 1)" font-size="3.8" fill="#000" stroke="#000" stroke-width="0.13" text-anchor="start" font-weight="normal" >Alerts?</text>
<text transform="translate(643.00 280.75) scale(0.882 1)" font-size="3.8" fill="#000" stroke="#000" stroke-width="0.13" text-anchor="start" font-weight="normal" >true</text>
<line x1="641.60" y1="282.68" x2="641.60" y2="288.94" stroke="#dcdcdc" stroke-width="0.3" />
<rect x="537.40" y="283.71" width="4.40" height="4.10" fill="#7fe08e" rx="0.6"/>
<path d="M538.1 286.81 l1.2 -1.8 l0.9 1.1 l1.3 -1.9" stroke="#2fa84a" stroke-width="0.6" fill="none"/>
<text transform="translate(543.40 287.01) scale(0.882 1)" font-size="3.8" fill="#000" stroke="#000" stroke-width="0.13" text-anchor="start" font-weight="normal" >Alerts open bar?</text>
<text transform="translate(643.00 287.01) scale(0.882 1)" font-size="3.8" fill="#000" stroke="#000" stroke-width="0.13" text-anchor="start" font-weight="normal" >false</text>
<rect x="536.80" y="288.94" width="210.20" height="6.26" fill="#ebebeb" />
<line x1="641.60" y1="288.94" x2="641.60" y2="295.20" stroke="#dcdcdc" stroke-width="0.3" />
<rect x="537.40" y="289.97" width="4.40" height="4.10" fill="#7fe08e" rx="0.6"/>
<path d="M538.1 293.07 l1.2 -1.8 l0.9 1.1 l1.3 -1.9" stroke="#2fa84a" stroke-width="0.6" fill="none"/>
<text transform="translate(543.40 293.27) scale(0.882 1)" font-size="3.8" fill="#000" stroke="#000" stroke-width="0.13" text-anchor="start" font-weight="normal" >Alerts message?</text>
<text transform="translate(643.00 293.27) scale(0.882 1)" font-size="3.8" fill="#000" stroke="#000" stroke-width="0.13" text-anchor="start" font-weight="normal" >true</text>
<line x1="641.60" y1="295.21" x2="641.60" y2="301.47" stroke="#dcdcdc" stroke-width="0.3" />
<rect x="537.40" y="296.24" width="4.40" height="4.10" fill="#7fe08e" rx="0.6"/>
<path d="M538.1 299.34 l1.2 -1.8 l0.9 1.1 l1.3 -1.9" stroke="#2fa84a" stroke-width="0.6" fill="none"/>
<text transform="translate(543.40 299.54) scale(0.882 1)" font-size="3.8" fill="#000" stroke="#000" stroke-width="0.13" text-anchor="start" font-weight="normal" >Alerts sound?</text>
<text transform="translate(643.00 299.54) scale(0.882 1)" font-size="3.8" fill="#000" stroke="#000" stroke-width="0.13" text-anchor="start" font-weight="normal" >false</text>
<rect x="536.80" y="301.47" width="210.20" height="6.26" fill="#ebebeb" />
<line x1="641.60" y1="301.47" x2="641.60" y2="307.73" stroke="#dcdcdc" stroke-width="0.3" />
<rect x="537.40" y="302.50" width="4.40" height="4.10" fill="#7fe08e" rx="0.6"/>
<path d="M538.1 305.60 l1.2 -1.8 l0.9 1.1 l1.3 -1.9" stroke="#2fa84a" stroke-width="0.6" fill="none"/>
<text transform="translate(543.40 305.80) scale(0.882 1)" font-size="3.8" fill="#000" stroke="#000" stroke-width="0.13" text-anchor="start" font-weight="normal" >Alerts notification?</text>
<text transform="translate(643.00 305.80) scale(0.882 1)" font-size="3.8" fill="#000" stroke="#000" stroke-width="0.13" text-anchor="start" font-weight="normal" >false</text>
<line x1="641.60" y1="307.73" x2="641.60" y2="313.99" stroke="#dcdcdc" stroke-width="0.3" />
<rect x="537.40" y="308.76" width="4.40" height="4.10" fill="#7fe08e" rx="0.6"/>
<path d="M538.1 311.86 l1.2 -1.8 l0.9 1.1 l1.3 -1.9" stroke="#2fa84a" stroke-width="0.6" fill="none"/>
<text transform="translate(543.40 312.06) scale(0.882 1)" font-size="3.8" fill="#000" stroke="#000" stroke-width="0.13" text-anchor="start" font-weight="normal" >Alerts email?</text>
<text transform="translate(643.00 312.06) scale(0.882 1)" font-size="3.8" fill="#000" stroke="#000" stroke-width="0.13" text-anchor="start" font-weight="normal" >false</text>
<rect x="536.80" y="313.99" width="210.20" height="6.26" fill="#ebebeb" />
<line x1="641.60" y1="313.99" x2="641.60" y2="320.25" stroke="#dcdcdc" stroke-width="0.3" />
<rect x="537.40" y="315.02" width="4.40" height="4.10" fill="#7fe08e" rx="0.6"/>
<path d="M538.1 318.12 l1.2 -1.8 l0.9 1.1 l1.3 -1.9" stroke="#2fa84a" stroke-width="0.6" fill="none"/>
<text transform="translate(543.40 318.32) scale(0.882 1)" font-size="3.8" fill="#000" stroke="#000" stroke-width="0.13" text-anchor="start" font-weight="normal" >Arrow on first bars true/false</text>
<text transform="translate(643.00 318.32) scale(0.882 1)" font-size="3.8" fill="#000" stroke="#000" stroke-width="0.13" text-anchor="start" font-weight="normal" >true</text>
<line x1="641.60" y1="320.25" x2="641.60" y2="326.51" stroke="#dcdcdc" stroke-width="0.3" />
<rect x="537.40" y="321.28" width="4.40" height="4.10" fill="#62a4ea" rx="0.6"/>
<rect x="538.10" y="322.88" width="3.00" height="1.10" fill="#e4f0ff" />
<text transform="translate(543.40 324.58) scale(0.882 1)" font-size="3.8" fill="#000" stroke="#000" stroke-width="0.13" text-anchor="start" font-weight="normal" >Up Arrow size</text>
<text transform="translate(643.00 324.58) scale(0.882 1)" font-size="3.8" fill="#000" stroke="#000" stroke-width="0.13" text-anchor="start" font-weight="normal" >0</text>
<rect x="536.80" y="326.52" width="210.20" height="6.26" fill="#ebebeb" />
<line x1="641.60" y1="326.52" x2="641.60" y2="332.78" stroke="#dcdcdc" stroke-width="0.3" />
<rect x="537.40" y="327.55" width="4.40" height="4.10" fill="#62a4ea" rx="0.6"/>
<rect x="538.10" y="329.15" width="3.00" height="1.10" fill="#e4f0ff" />
<text transform="translate(543.40 330.85) scale(0.882 1)" font-size="3.8" fill="#000" stroke="#000" stroke-width="0.13" text-anchor="start" font-weight="normal" >Down Arrow size</text>
<text transform="translate(643.00 330.85) scale(0.882 1)" font-size="3.8" fill="#000" stroke="#000" stroke-width="0.13" text-anchor="start" font-weight="normal" >0</text>
</g>
<rect x="747.00" y="112.60" width="5.00" height="217.20" fill="#f0f0f0" />
<rect x="747.40" y="118.40" width="4.20" height="206.20" fill="#cdcdcd" />
<path d="M748.2 116.4 l1.4 -1.6 l1.4 1.6 z M748.2 326.2 l1.4 1.6 l1.4 -1.6 z" fill="#333"/>
<rect x="531.75" y="225.95" width="220.5" height="7.35" fill="none" stroke="#14a63c" stroke-width="2.1"/>
<path d="M744.9 122.4 Q728 127.6 708.4 135.6 M708.4 130.3 Q705 135 703.8 140.5 Q708 139.2 711.4 138.8" stroke="#52c484" stroke-width="0.6" fill="none" stroke-linecap="round"/>
<path d="M747.3 171.6 Q722 177.5 704.9 186 M705.6 182.3 Q703 185.5 701.4 188.8 Q707 189.3 713.8 189.3" stroke="#52c484" stroke-width="0.6" fill="none" stroke-linecap="round"/>
<rect x="755.00" y="313.00" width="32.60" height="6.40" fill="#e1e1e1" stroke="#adadad" stroke-width="0.35"/>
<text transform="translate(771.30 317.40) scale(0.882 1)" font-size="3.8" fill="#000" stroke="#000" stroke-width="0.13" text-anchor="middle" font-weight="normal" >Load</text>
<rect x="755.00" y="323.20" width="32.60" height="6.40" fill="#e1e1e1" stroke="#adadad" stroke-width="0.35"/>
<text transform="translate(771.30 327.60) scale(0.882 1)" font-size="3.8" fill="#000" stroke="#000" stroke-width="0.13" text-anchor="middle" font-weight="normal" >Save</text>
<rect x="716.40" y="335.20" width="23.00" height="6.20" fill="#e1e1e1" stroke="#0078d7" stroke-width="0.7"/>
<text transform="translate(727.90 339.50) scale(0.882 1)" font-size="3.8" fill="#000" stroke="#000" stroke-width="0.13" text-anchor="middle" font-weight="normal" >OK</text>
<rect x="742.00" y="335.20" width="22.60" height="6.20" fill="#e1e1e1" stroke="#adadad" stroke-width="0.35"/>
<text transform="translate(753.30 339.50) scale(0.882 1)" font-size="3.8" fill="#000" stroke="#000" stroke-width="0.13" text-anchor="middle" font-weight="normal" >Cancel</text>
<rect x="767.40" y="335.20" width="22.20" height="6.20" fill="#e1e1e1" stroke="#adadad" stroke-width="0.35"/>
<text transform="translate(778.50 339.50) scale(0.882 1)" font-size="3.8" fill="#000" stroke="#000" stroke-width="0.13" text-anchor="middle" font-weight="normal" >Reset</text>
</g>
</svg>
</body></html>
